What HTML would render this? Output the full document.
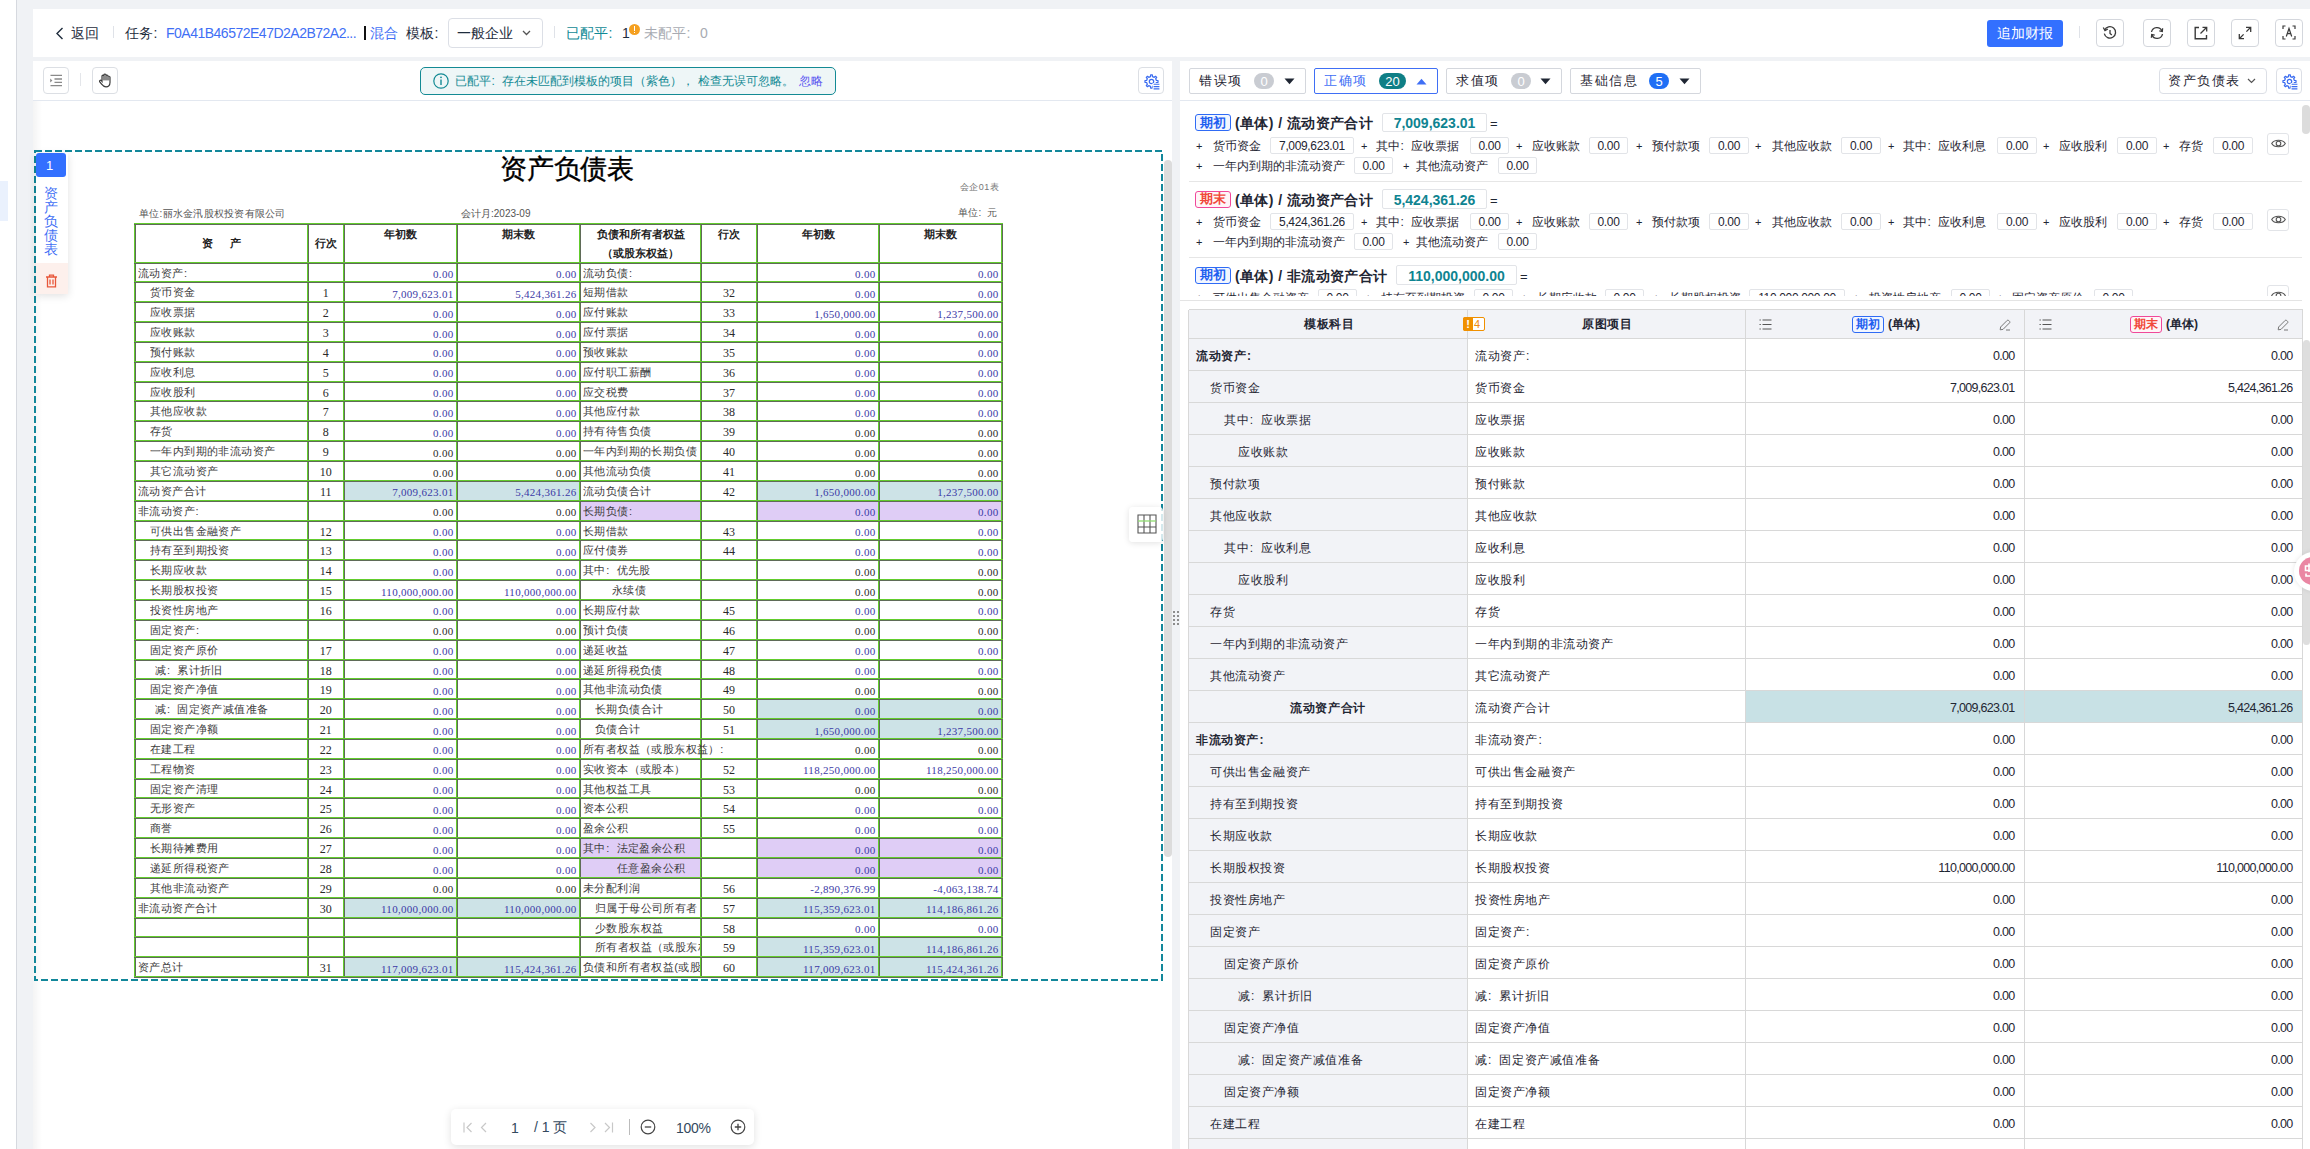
<!DOCTYPE html><html><head><meta charset="utf-8"><title>recon</title><style>

*{box-sizing:border-box;margin:0;padding:0}
html,body{width:2310px;height:1149px;overflow:hidden}
body{position:relative;background:#f0f2f5;font-family:"Liberation Sans",sans-serif;color:#1f2633;font-size:14px}
.a{position:absolute}
.t{position:absolute;white-space:nowrap;line-height:1}
.btn{position:absolute;border:1px solid #d4d7dd;border-radius:4px;background:#fff}
.sep{position:absolute;width:1px;background:#dfe2e8}
svg{position:absolute;overflow:visible}

</style></head><body>
<div class="a" style="left:0;top:0;width:17px;height:1149px;background:#fff;border-right:1px solid #d6d9df"></div>
<div class="a" style="left:0;top:181px;width:8px;height:40px;background:#eaf1fd"></div>
<div class="a" style="left:33px;top:9px;width:2277px;height:48px;background:#fff"></div>
<svg style="left:55px;top:27px" width="10" height="13" viewBox="0 0 10 13"><path d="M7.5 1 L2 6.5 L7.5 12" fill="none" stroke="#1f2d3d" stroke-width="1.4"/></svg>
<div class="t" style="left:71px;top:26px;font-size:14px;color:#1f2d3d">返回</div>
<div class="sep" style="left:113px;top:26px;height:12px"></div>
<div class="t" style="left:125px;top:26px;font-size:14px;color:#1f2d3d">任务<span style="display:inline-block;width:13.12px;padding-left:0.5px">:</span></div>
<div class="t" style="left:166px;top:26px;font-size:14px;color:#3f6ff5;letter-spacing:-0.5px">F0A41B46572E47D2A2B72A2...</div>
<div class="a" style="left:364px;top:26px;width:2px;height:14px;background:#111"></div>
<div class="t" style="left:370px;top:26px;font-size:14px;color:#3f6ff5">混合</div>
<div class="t" style="left:406px;top:26px;font-size:14px;color:#1f2d3d">模板<span style="display:inline-block;width:13.12px;padding-left:0.5px">:</span></div>
<div class="btn" style="left:448px;top:18px;width:95px;height:30px;border-color:#dcdfe6"></div>
<div class="t" style="left:457px;top:26px;font-size:14px;color:#1f2d3d">一般企业</div>
<svg style="left:522px;top:30px" width="9" height="6" viewBox="0 0 9 6"><path d="M1 1 L4.5 4.5 L8 1" fill="none" stroke="#555" stroke-width="1.3"/></svg>
<div class="sep" style="left:554px;top:26px;height:12px"></div>
<div class="t" style="left:566px;top:26px;font-size:14px;color:#118a96">已配平<span style="display:inline-block;width:13.12px;padding-left:0.5px">:</span></div>
<div class="t" style="left:622px;top:26px;font-size:14px;color:#1f2d3d">1</div>
<div class="a" style="left:629px;top:24px;width:11px;height:11px;border-radius:50%;background:#f5a020"></div>
<div class="a" style="left:633.8px;top:26px;width:1.6px;height:4.5px;background:#fff"></div>
<div class="a" style="left:633.8px;top:31.5px;width:1.6px;height:1.6px;background:#fff"></div>
<div class="t" style="left:644px;top:26px;font-size:14px;color:#a8abb2">未配平<span style="display:inline-block;width:13.12px;padding-left:0.5px">:</span></div>
<div class="t" style="left:700px;top:26px;font-size:14px;color:#a8abb2">0</div>
<div class="a" style="left:1987px;top:20px;width:76px;height:27px;border-radius:3px;background:#3370ff"></div>
<div class="t" style="left:1997px;top:26px;font-size:14px;color:#fff">追加财报</div>
<div class="sep" style="left:2079px;top:26px;height:12px"></div>
<div class="btn" style="left:2096px;top:19px;width:28px;height:28px"></div>
<div class="btn" style="left:2143px;top:19px;width:28px;height:28px"></div>
<div class="btn" style="left:2187px;top:19px;width:28px;height:28px"></div>
<div class="btn" style="left:2231px;top:19px;width:28px;height:28px"></div>
<div class="btn" style="left:2275px;top:19px;width:28px;height:28px"></div>
<svg style="left:2103px;top:26px" width="14" height="14" viewBox="0 0 14 14"><path d="M1.6 4.2 A5.7 5.7 0 1 1 1.3 7.6" fill="none" stroke="#3a3a3a" stroke-width="1.3"/><path d="M0.3 1.5 L2 4.6 L4.9 3" fill="none" stroke="#3a3a3a" stroke-width="1.3"/><path d="M7 4 V7.4 L8.8 9" fill="none" stroke="#3a3a3a" stroke-width="1.3"/></svg>
<svg style="left:2150px;top:26px" width="14" height="14" viewBox="0 0 14 14"><path d="M1.5 6 A5.5 5.5 0 0 1 12 5" fill="none" stroke="#3a3a3a" stroke-width="1.3"/><path d="M12.5 8 A5.5 5.5 0 0 1 2 9" fill="none" stroke="#3a3a3a" stroke-width="1.3"/><path d="M12.6 2.3 L12.3 5.4 L9.3 4.8" fill="none" stroke="#3a3a3a" stroke-width="1.3"/><path d="M1.4 11.7 L1.7 8.6 L4.7 9.2" fill="none" stroke="#3a3a3a" stroke-width="1.3"/></svg>
<svg style="left:2194px;top:26px" width="14" height="14" viewBox="0 0 14 14"><path d="M5 1.5 H1.2 V12.8 H12.5 V9" fill="none" stroke="#3a3a3a" stroke-width="1.4"/><path d="M6.5 7.5 L12.5 1.5 M8.5 1.3 H12.7 V5.5" fill="none" stroke="#3a3a3a" stroke-width="1.3"/></svg>
<svg style="left:2238px;top:26px" width="14" height="14" viewBox="0 0 14 14"><path d="M1.3 12.7 L5.6 8.4 M8.4 5.6 L12.7 1.3 M8 1.3 H12.7 V6 M1.3 8 V12.7 H6" fill="none" stroke="#3a3a3a" stroke-width="1.3"/></svg>
<svg style="left:2282px;top:25px" width="14" height="15" viewBox="0 0 14 15"><path d="M1 4 V1 H3.5 M10.5 1 H13 V4 M13 11 V14 H10.5 M3.5 14 H1 V11" fill="none" stroke="#3a3a3a" stroke-width="1.2"/><path d="M4.3 11.5 L7 3.5 L9.7 11.5 M5.3 8.7 H8.7" fill="none" stroke="#3a3a3a" stroke-width="1.2"/></svg>
<div class="a" style="left:33px;top:61px;width:1139px;height:1088px;background:#fff"></div>
<div class="a" style="left:33px;top:100px;width:1139px;height:1px;background:#e3e8f0"></div>
<div class="btn" style="left:43px;top:67px;width:26px;height:27px;border-color:#dcdfe4"></div>
<svg style="left:49px;top:74px" width="14" height="13" viewBox="0 0 14 13"><path d="M1.5 1.3 H13 M5.5 5 H13 M5.5 8.3 H13 M1.5 11.7 H13" stroke="#8a8a8a" stroke-width="1.3"/><path d="M1.2 4.6 L3.4 6.6 L1.2 8.6 Z" fill="#8a8a8a"/></svg>
<div class="sep" style="left:80px;top:73px;height:13px;background:#e4e6ea"></div>
<div class="btn" style="left:92px;top:67px;width:26px;height:27px;border-color:#dcdfe4"></div>
<svg style="left:98px;top:73px" width="14" height="15" viewBox="0 0 14 15"><path d="M4 8.5 V3.2 A1 1 0 0 1 6 3.2 V2 A1 1 0 0 1 8 2 V3 A1 1 0 0 1 10 3 V4.3 A1 1 0 0 1 12 4.3 V9.5 C12 12.5 10.3 13.8 8 13.8 C5.8 13.8 4.8 12.8 3.6 11.2 L1.6 8.6 A1 1 0 0 1 3.2 7.5 Z" fill="#fff" stroke="#3a3a3a" stroke-width="1.2"/><path d="M6 3.2 V7.5 M8 3 V7.5 M10 4.3 V7.5" stroke="#3a3a3a" stroke-width="1"/><path d="M4.3 3 H11.7 V7 H4.3Z" fill="#7a7a7a" opacity="0.55"/></svg>
<div class="a" style="left:420px;top:67px;width:416px;height:28px;border:1px solid #138a94;border-radius:5px;background:#eef6f7"></div>
<svg style="left:433px;top:73px" width="16" height="16" viewBox="0 0 16 16"><circle cx="8" cy="8" r="7.2" fill="none" stroke="#138a94" stroke-width="1.2"/><path d="M8 6.5 V12" stroke="#138a94" stroke-width="1.4"/><circle cx="8" cy="4.3" r="0.9" fill="#138a94"/></svg>
<div class="t" style="left:455px;top:75px;font-size:12px;color:#138a94">已配平<span style="display:inline-block;width:11.25px;padding-left:0.5px">:</span>存在未匹配到模板的项目（紫色）， 检查无误可忽略。</div>
<div class="t" style="left:799px;top:75px;font-size:12px;color:#5a55f0">忽略</div>
<div class="btn" style="left:1138px;top:67px;width:26px;height:27px;border-color:#dcdfe4"></div>
<svg style="left:1144px;top:74px" width="16" height="16" viewBox="0 0 16 16"><path d="M12.40 6.51 L14.04 6.64 L14.04 8.36 L12.40 8.49 L11.67 10.26 L12.73 11.52 L11.52 12.73 L10.26 11.67 L8.49 12.40 L8.36 14.04 L6.64 14.04 L6.51 12.40 L4.74 11.67 L3.48 12.73 L2.27 11.52 L3.33 10.26 L2.60 8.49 L0.96 8.36 L0.96 6.64 L2.60 6.51 L3.33 4.74 L2.27 3.48 L3.48 2.27 L4.74 3.33 L6.51 2.60 L6.64 0.96 L8.36 0.96 L8.49 2.60 L10.26 3.33 L11.52 2.27 L12.73 3.48 L11.67 4.74 Z" fill="none" stroke="#3b6cf0" stroke-width="1.2" stroke-linejoin="round"/><circle cx="7.5" cy="7.5" r="2.2" fill="none" stroke="#3b6cf0" stroke-width="1.2"/><rect x="8.6" y="9" width="8" height="8" fill="#fff"/><path d="M9.6 10.3 H15.4 M9.6 12.6 H15.4 M9.6 14.9 H15.4" stroke="#3b6cf0" stroke-width="1.1"/></svg>
<div class="a" style="left:33px;top:101px;width:9px;height:1048px;background:linear-gradient(to right,rgba(0,0,0,0.045),rgba(0,0,0,0))"></div>
<div class="a" style="left:1164px;top:160px;width:8px;height:697px;border-radius:4px;background:#dcdcdc"></div>
<div class="a" style="left:1173px;top:611px;width:2px;height:2px;background:#8c8c8c"></div>
<div class="a" style="left:1177px;top:611px;width:2px;height:2px;background:#8c8c8c"></div>
<div class="a" style="left:1173px;top:615px;width:2px;height:2px;background:#8c8c8c"></div>
<div class="a" style="left:1177px;top:615px;width:2px;height:2px;background:#8c8c8c"></div>
<div class="a" style="left:1173px;top:619px;width:2px;height:2px;background:#8c8c8c"></div>
<div class="a" style="left:1177px;top:619px;width:2px;height:2px;background:#8c8c8c"></div>
<div class="a" style="left:1173px;top:623px;width:2px;height:2px;background:#8c8c8c"></div>
<div class="a" style="left:1177px;top:623px;width:2px;height:2px;background:#8c8c8c"></div>
<div class="t" style="left:500px;top:156px;font-size:27px;font-weight:normal;color:#000;letter-spacing:-0.2px;-webkit-text-stroke:0.35px #000">资产负债表</div>
<div class="t" style="left:960px;top:183px;font-size:9px;letter-spacing:0.4px;color:#777">会企01表</div>
<div class="t" style="left:139px;top:209px;font-size:10px;letter-spacing:0.25px;color:#555">单位:丽水金汛股权投资有限公司</div>
<div class="t" style="left:461px;top:209px;font-size:10px;color:#555">会计月:2023-09</div>
<div class="t" style="left:958px;top:208px;font-size:10px;color:#555">单位<span style="display:inline-block;width:9.38px;padding-left:0.5px">:</span>元</div>
<div class="a" style="left:343.5px;top:480.85px;width:236.5px;height:19.850000000000023px;background:#cde3e7"></div>
<div class="a" style="left:343.5px;top:897.7px;width:236.5px;height:19.850000000000023px;background:#cde3e7"></div>
<div class="a" style="left:343.5px;top:957.25px;width:236.5px;height:19.850000000000023px;background:#cde3e7"></div>
<div class="a" style="left:757px;top:480.85px;width:245px;height:19.850000000000023px;background:#cde3e7"></div>
<div class="a" style="left:580px;top:500.70000000000005px;width:121px;height:19.84999999999991px;background:#dfcdf6"></div>
<div class="a" style="left:757px;top:500.70000000000005px;width:245px;height:19.84999999999991px;background:#dfcdf6"></div>
<div class="a" style="left:757px;top:699.2px;width:245px;height:19.84999999999991px;background:#cde3e7"></div>
<div class="a" style="left:757px;top:719.05px;width:245px;height:19.850000000000136px;background:#cde3e7"></div>
<div class="a" style="left:580px;top:838.1500000000001px;width:121px;height:19.84999999999991px;background:#dfcdf6"></div>
<div class="a" style="left:757px;top:838.1500000000001px;width:245px;height:19.84999999999991px;background:#dfcdf6"></div>
<div class="a" style="left:580px;top:858.0px;width:121px;height:19.850000000000023px;background:#dfcdf6"></div>
<div class="a" style="left:757px;top:858.0px;width:245px;height:19.850000000000023px;background:#dfcdf6"></div>
<div class="a" style="left:757px;top:897.7px;width:245px;height:19.850000000000023px;background:#cde3e7"></div>
<div class="a" style="left:757px;top:937.4000000000001px;width:245px;height:19.84999999999991px;background:#cde3e7"></div>
<div class="a" style="left:757px;top:957.25px;width:245px;height:19.850000000000023px;background:#cde3e7"></div>
<div class="a" style="left:134px;top:222.5px;width:1px;height:755.6px;background:#62cc2c"></div>
<div class="a" style="left:135px;top:222.5px;width:1px;height:755.6px;background:#5f6b58"></div>
<div class="a" style="left:307px;top:222.5px;width:1px;height:755.6px;background:#62cc2c"></div>
<div class="a" style="left:308px;top:222.5px;width:1px;height:755.6px;background:#5f6b58"></div>
<div class="a" style="left:342.5px;top:222.5px;width:1px;height:755.6px;background:#62cc2c"></div>
<div class="a" style="left:343.5px;top:222.5px;width:1px;height:755.6px;background:#5f6b58"></div>
<div class="a" style="left:456px;top:222.5px;width:1px;height:755.6px;background:#62cc2c"></div>
<div class="a" style="left:457px;top:222.5px;width:1px;height:755.6px;background:#5f6b58"></div>
<div class="a" style="left:579px;top:222.5px;width:1px;height:755.6px;background:#62cc2c"></div>
<div class="a" style="left:580px;top:222.5px;width:1px;height:755.6px;background:#5f6b58"></div>
<div class="a" style="left:700px;top:222.5px;width:1px;height:755.6px;background:#62cc2c"></div>
<div class="a" style="left:701px;top:222.5px;width:1px;height:755.6px;background:#5f6b58"></div>
<div class="a" style="left:756px;top:222.5px;width:1px;height:755.6px;background:#62cc2c"></div>
<div class="a" style="left:757px;top:222.5px;width:1px;height:755.6px;background:#5f6b58"></div>
<div class="a" style="left:878px;top:222.5px;width:1px;height:755.6px;background:#62cc2c"></div>
<div class="a" style="left:879px;top:222.5px;width:1px;height:755.6px;background:#5f6b58"></div>
<div class="a" style="left:1001px;top:222.5px;width:1px;height:755.6px;background:#62cc2c"></div>
<div class="a" style="left:1002px;top:222.5px;width:1px;height:755.6px;background:#5f6b58"></div>
<div class="a" style="left:134px;top:222.5px;width:869px;height:1px;background:#62cc2c"></div>
<div class="a" style="left:134px;top:223.5px;width:869px;height:1px;background:#5f6b58"></div>
<div class="a" style="left:134px;top:261.5px;width:869px;height:1px;background:#62cc2c"></div>
<div class="a" style="left:134px;top:262.5px;width:869px;height:1px;background:#5f6b58"></div>
<div class="a" style="left:134px;top:281.35px;width:869px;height:1px;background:#62cc2c"></div>
<div class="a" style="left:134px;top:282.35px;width:869px;height:1px;background:#5f6b58"></div>
<div class="a" style="left:134px;top:301.2px;width:869px;height:1px;background:#62cc2c"></div>
<div class="a" style="left:134px;top:302.2px;width:869px;height:1px;background:#5f6b58"></div>
<div class="a" style="left:134px;top:321.05px;width:869px;height:1px;background:#62cc2c"></div>
<div class="a" style="left:134px;top:322.05px;width:869px;height:1px;background:#5f6b58"></div>
<div class="a" style="left:134px;top:340.9px;width:869px;height:1px;background:#62cc2c"></div>
<div class="a" style="left:134px;top:341.9px;width:869px;height:1px;background:#5f6b58"></div>
<div class="a" style="left:134px;top:360.75px;width:869px;height:1px;background:#62cc2c"></div>
<div class="a" style="left:134px;top:361.75px;width:869px;height:1px;background:#5f6b58"></div>
<div class="a" style="left:134px;top:380.6px;width:869px;height:1px;background:#62cc2c"></div>
<div class="a" style="left:134px;top:381.6px;width:869px;height:1px;background:#5f6b58"></div>
<div class="a" style="left:134px;top:400.45000000000005px;width:869px;height:1px;background:#62cc2c"></div>
<div class="a" style="left:134px;top:401.45000000000005px;width:869px;height:1px;background:#5f6b58"></div>
<div class="a" style="left:134px;top:420.3px;width:869px;height:1px;background:#62cc2c"></div>
<div class="a" style="left:134px;top:421.3px;width:869px;height:1px;background:#5f6b58"></div>
<div class="a" style="left:134px;top:440.15px;width:869px;height:1px;background:#62cc2c"></div>
<div class="a" style="left:134px;top:441.15px;width:869px;height:1px;background:#5f6b58"></div>
<div class="a" style="left:134px;top:460.0px;width:869px;height:1px;background:#62cc2c"></div>
<div class="a" style="left:134px;top:461.0px;width:869px;height:1px;background:#5f6b58"></div>
<div class="a" style="left:134px;top:479.85px;width:869px;height:1px;background:#62cc2c"></div>
<div class="a" style="left:134px;top:480.85px;width:869px;height:1px;background:#5f6b58"></div>
<div class="a" style="left:134px;top:499.70000000000005px;width:869px;height:1px;background:#62cc2c"></div>
<div class="a" style="left:134px;top:500.70000000000005px;width:869px;height:1px;background:#5f6b58"></div>
<div class="a" style="left:134px;top:519.55px;width:869px;height:1px;background:#62cc2c"></div>
<div class="a" style="left:134px;top:520.55px;width:869px;height:1px;background:#5f6b58"></div>
<div class="a" style="left:134px;top:539.4000000000001px;width:869px;height:1px;background:#62cc2c"></div>
<div class="a" style="left:134px;top:540.4000000000001px;width:869px;height:1px;background:#5f6b58"></div>
<div class="a" style="left:134px;top:559.25px;width:869px;height:1px;background:#62cc2c"></div>
<div class="a" style="left:134px;top:560.25px;width:869px;height:1px;background:#5f6b58"></div>
<div class="a" style="left:134px;top:579.1px;width:869px;height:1px;background:#62cc2c"></div>
<div class="a" style="left:134px;top:580.1px;width:869px;height:1px;background:#5f6b58"></div>
<div class="a" style="left:134px;top:598.95px;width:869px;height:1px;background:#62cc2c"></div>
<div class="a" style="left:134px;top:599.95px;width:869px;height:1px;background:#5f6b58"></div>
<div class="a" style="left:134px;top:618.8px;width:869px;height:1px;background:#62cc2c"></div>
<div class="a" style="left:134px;top:619.8px;width:869px;height:1px;background:#5f6b58"></div>
<div class="a" style="left:134px;top:638.6500000000001px;width:869px;height:1px;background:#62cc2c"></div>
<div class="a" style="left:134px;top:639.6500000000001px;width:869px;height:1px;background:#5f6b58"></div>
<div class="a" style="left:134px;top:658.5px;width:869px;height:1px;background:#62cc2c"></div>
<div class="a" style="left:134px;top:659.5px;width:869px;height:1px;background:#5f6b58"></div>
<div class="a" style="left:134px;top:678.35px;width:869px;height:1px;background:#62cc2c"></div>
<div class="a" style="left:134px;top:679.35px;width:869px;height:1px;background:#5f6b58"></div>
<div class="a" style="left:134px;top:698.2px;width:869px;height:1px;background:#62cc2c"></div>
<div class="a" style="left:134px;top:699.2px;width:869px;height:1px;background:#5f6b58"></div>
<div class="a" style="left:134px;top:718.05px;width:869px;height:1px;background:#62cc2c"></div>
<div class="a" style="left:134px;top:719.05px;width:869px;height:1px;background:#5f6b58"></div>
<div class="a" style="left:134px;top:737.9000000000001px;width:869px;height:1px;background:#62cc2c"></div>
<div class="a" style="left:134px;top:738.9000000000001px;width:869px;height:1px;background:#5f6b58"></div>
<div class="a" style="left:134px;top:757.75px;width:869px;height:1px;background:#62cc2c"></div>
<div class="a" style="left:134px;top:758.75px;width:869px;height:1px;background:#5f6b58"></div>
<div class="a" style="left:134px;top:777.6px;width:869px;height:1px;background:#62cc2c"></div>
<div class="a" style="left:134px;top:778.6px;width:869px;height:1px;background:#5f6b58"></div>
<div class="a" style="left:134px;top:797.45px;width:869px;height:1px;background:#62cc2c"></div>
<div class="a" style="left:134px;top:798.45px;width:869px;height:1px;background:#5f6b58"></div>
<div class="a" style="left:134px;top:817.3000000000001px;width:869px;height:1px;background:#62cc2c"></div>
<div class="a" style="left:134px;top:818.3000000000001px;width:869px;height:1px;background:#5f6b58"></div>
<div class="a" style="left:134px;top:837.1500000000001px;width:869px;height:1px;background:#62cc2c"></div>
<div class="a" style="left:134px;top:838.1500000000001px;width:869px;height:1px;background:#5f6b58"></div>
<div class="a" style="left:134px;top:857.0px;width:869px;height:1px;background:#62cc2c"></div>
<div class="a" style="left:134px;top:858.0px;width:869px;height:1px;background:#5f6b58"></div>
<div class="a" style="left:134px;top:876.85px;width:869px;height:1px;background:#62cc2c"></div>
<div class="a" style="left:134px;top:877.85px;width:869px;height:1px;background:#5f6b58"></div>
<div class="a" style="left:134px;top:896.7px;width:869px;height:1px;background:#62cc2c"></div>
<div class="a" style="left:134px;top:897.7px;width:869px;height:1px;background:#5f6b58"></div>
<div class="a" style="left:134px;top:916.5500000000001px;width:869px;height:1px;background:#62cc2c"></div>
<div class="a" style="left:134px;top:917.5500000000001px;width:869px;height:1px;background:#5f6b58"></div>
<div class="a" style="left:134px;top:936.4000000000001px;width:869px;height:1px;background:#62cc2c"></div>
<div class="a" style="left:134px;top:937.4000000000001px;width:869px;height:1px;background:#5f6b58"></div>
<div class="a" style="left:134px;top:956.25px;width:869px;height:1px;background:#62cc2c"></div>
<div class="a" style="left:134px;top:957.25px;width:869px;height:1px;background:#5f6b58"></div>
<div class="a" style="left:134px;top:976.1px;width:869px;height:1px;background:#62cc2c"></div>
<div class="a" style="left:134px;top:977.1px;width:869px;height:1px;background:#5f6b58"></div>
<div class="t" style="left:202px;top:238px;font-size:11px;font-weight:bold;color:#222">资</div>
<div class="t" style="left:230px;top:238px;font-size:11px;font-weight:bold;color:#222">产</div>
<div class="t" style="left:225.75px;top:238px;width:200px;text-align:center;font-size:11px;font-weight:bold;color:#222">行次</div>
<div class="t" style="left:300.25px;top:228.5px;width:200px;text-align:center;font-size:11px;font-weight:bold;color:#222">年初数</div>
<div class="t" style="left:418.5px;top:228.5px;width:200px;text-align:center;font-size:11px;font-weight:bold;color:#222">期末数</div>
<div class="t" style="left:540.5px;top:228.5px;width:200px;text-align:center;font-size:11px;font-weight:bold;color:#222">负债和所有者权益</div>
<div class="t" style="left:540.5px;top:248px;width:200px;text-align:center;font-size:11px;font-weight:bold;color:#222">（或股东权益）</div>
<div class="t" style="left:629.0px;top:228.5px;width:200px;text-align:center;font-size:11px;font-weight:bold;color:#222">行次</div>
<div class="t" style="left:718.0px;top:228.5px;width:200px;text-align:center;font-size:11px;font-weight:bold;color:#222">年初数</div>
<div class="t" style="left:840.5px;top:228.5px;width:200px;text-align:center;font-size:11px;font-weight:bold;color:#222">期末数</div>
<div class="t" style="left:138px;top:267.5px;overflow:hidden;width:169px;font-size:11px;letter-spacing:0.4px;color:#3c3c3c">流动资产<span style="display:inline-block;width:10.71px;padding-left:0.5px">:</span></div>
<div class="t" style="left:253.5px;top:269.0px;width:200px;text-align:right;font-family:'Liberation Serif',serif;font-size:11px;letter-spacing:0.3px;color:#3b3aa6">0.00</div>
<div class="t" style="left:376.5px;top:269.0px;width:200px;text-align:right;font-family:'Liberation Serif',serif;font-size:11px;letter-spacing:0.3px;color:#3b3aa6">0.00</div>
<div class="t" style="left:150px;top:287.35px;overflow:hidden;width:157px;font-size:11px;letter-spacing:0.4px;color:#3c3c3c">货币资金</div>
<div class="t" style="left:225.75px;top:287.35px;width:200px;text-align:center;font-family:'Liberation Serif',serif;font-size:12px;color:#2a2a2a">1</div>
<div class="t" style="left:253.5px;top:288.85px;width:200px;text-align:right;font-family:'Liberation Serif',serif;font-size:11px;letter-spacing:0.3px;color:#3b3aa6">7,009,623.01</div>
<div class="t" style="left:376.5px;top:288.85px;width:200px;text-align:right;font-family:'Liberation Serif',serif;font-size:11px;letter-spacing:0.3px;color:#3b3aa6">5,424,361.26</div>
<div class="t" style="left:150px;top:307.2px;overflow:hidden;width:157px;font-size:11px;letter-spacing:0.4px;color:#3c3c3c">应收票据</div>
<div class="t" style="left:225.75px;top:307.2px;width:200px;text-align:center;font-family:'Liberation Serif',serif;font-size:12px;color:#2a2a2a">2</div>
<div class="t" style="left:253.5px;top:308.7px;width:200px;text-align:right;font-family:'Liberation Serif',serif;font-size:11px;letter-spacing:0.3px;color:#3b3aa6">0.00</div>
<div class="t" style="left:376.5px;top:308.7px;width:200px;text-align:right;font-family:'Liberation Serif',serif;font-size:11px;letter-spacing:0.3px;color:#3b3aa6">0.00</div>
<div class="t" style="left:150px;top:327.05px;overflow:hidden;width:157px;font-size:11px;letter-spacing:0.4px;color:#3c3c3c">应收账款</div>
<div class="t" style="left:225.75px;top:327.05px;width:200px;text-align:center;font-family:'Liberation Serif',serif;font-size:12px;color:#2a2a2a">3</div>
<div class="t" style="left:253.5px;top:328.55px;width:200px;text-align:right;font-family:'Liberation Serif',serif;font-size:11px;letter-spacing:0.3px;color:#3b3aa6">0.00</div>
<div class="t" style="left:376.5px;top:328.55px;width:200px;text-align:right;font-family:'Liberation Serif',serif;font-size:11px;letter-spacing:0.3px;color:#3b3aa6">0.00</div>
<div class="t" style="left:150px;top:346.9px;overflow:hidden;width:157px;font-size:11px;letter-spacing:0.4px;color:#3c3c3c">预付账款</div>
<div class="t" style="left:225.75px;top:346.9px;width:200px;text-align:center;font-family:'Liberation Serif',serif;font-size:12px;color:#2a2a2a">4</div>
<div class="t" style="left:253.5px;top:348.4px;width:200px;text-align:right;font-family:'Liberation Serif',serif;font-size:11px;letter-spacing:0.3px;color:#3b3aa6">0.00</div>
<div class="t" style="left:376.5px;top:348.4px;width:200px;text-align:right;font-family:'Liberation Serif',serif;font-size:11px;letter-spacing:0.3px;color:#3b3aa6">0.00</div>
<div class="t" style="left:150px;top:366.75px;overflow:hidden;width:157px;font-size:11px;letter-spacing:0.4px;color:#3c3c3c">应收利息</div>
<div class="t" style="left:225.75px;top:366.75px;width:200px;text-align:center;font-family:'Liberation Serif',serif;font-size:12px;color:#2a2a2a">5</div>
<div class="t" style="left:253.5px;top:368.25px;width:200px;text-align:right;font-family:'Liberation Serif',serif;font-size:11px;letter-spacing:0.3px;color:#3b3aa6">0.00</div>
<div class="t" style="left:376.5px;top:368.25px;width:200px;text-align:right;font-family:'Liberation Serif',serif;font-size:11px;letter-spacing:0.3px;color:#3b3aa6">0.00</div>
<div class="t" style="left:150px;top:386.6px;overflow:hidden;width:157px;font-size:11px;letter-spacing:0.4px;color:#3c3c3c">应收股利</div>
<div class="t" style="left:225.75px;top:386.6px;width:200px;text-align:center;font-family:'Liberation Serif',serif;font-size:12px;color:#2a2a2a">6</div>
<div class="t" style="left:253.5px;top:388.1px;width:200px;text-align:right;font-family:'Liberation Serif',serif;font-size:11px;letter-spacing:0.3px;color:#3b3aa6">0.00</div>
<div class="t" style="left:376.5px;top:388.1px;width:200px;text-align:right;font-family:'Liberation Serif',serif;font-size:11px;letter-spacing:0.3px;color:#3b3aa6">0.00</div>
<div class="t" style="left:150px;top:406.45000000000005px;overflow:hidden;width:157px;font-size:11px;letter-spacing:0.4px;color:#3c3c3c">其他应收款</div>
<div class="t" style="left:225.75px;top:406.45000000000005px;width:200px;text-align:center;font-family:'Liberation Serif',serif;font-size:12px;color:#2a2a2a">7</div>
<div class="t" style="left:253.5px;top:407.95000000000005px;width:200px;text-align:right;font-family:'Liberation Serif',serif;font-size:11px;letter-spacing:0.3px;color:#3b3aa6">0.00</div>
<div class="t" style="left:376.5px;top:407.95000000000005px;width:200px;text-align:right;font-family:'Liberation Serif',serif;font-size:11px;letter-spacing:0.3px;color:#3b3aa6">0.00</div>
<div class="t" style="left:150px;top:426.3px;overflow:hidden;width:157px;font-size:11px;letter-spacing:0.4px;color:#3c3c3c">存货</div>
<div class="t" style="left:225.75px;top:426.3px;width:200px;text-align:center;font-family:'Liberation Serif',serif;font-size:12px;color:#2a2a2a">8</div>
<div class="t" style="left:253.5px;top:427.8px;width:200px;text-align:right;font-family:'Liberation Serif',serif;font-size:11px;letter-spacing:0.3px;color:#3b3aa6">0.00</div>
<div class="t" style="left:376.5px;top:427.8px;width:200px;text-align:right;font-family:'Liberation Serif',serif;font-size:11px;letter-spacing:0.3px;color:#3b3aa6">0.00</div>
<div class="t" style="left:150px;top:446.15px;overflow:hidden;width:157px;font-size:11px;letter-spacing:0.4px;color:#3c3c3c">一年内到期的非流动资产</div>
<div class="t" style="left:225.75px;top:446.15px;width:200px;text-align:center;font-family:'Liberation Serif',serif;font-size:12px;color:#2a2a2a">9</div>
<div class="t" style="left:253.5px;top:447.65px;width:200px;text-align:right;font-family:'Liberation Serif',serif;font-size:11px;letter-spacing:0.3px;color:#2a2a2a">0.00</div>
<div class="t" style="left:376.5px;top:447.65px;width:200px;text-align:right;font-family:'Liberation Serif',serif;font-size:11px;letter-spacing:0.3px;color:#2a2a2a">0.00</div>
<div class="t" style="left:150px;top:466.0px;overflow:hidden;width:157px;font-size:11px;letter-spacing:0.4px;color:#3c3c3c">其它流动资产</div>
<div class="t" style="left:225.75px;top:466.0px;width:200px;text-align:center;font-family:'Liberation Serif',serif;font-size:12px;color:#2a2a2a">10</div>
<div class="t" style="left:253.5px;top:467.5px;width:200px;text-align:right;font-family:'Liberation Serif',serif;font-size:11px;letter-spacing:0.3px;color:#2a2a2a">0.00</div>
<div class="t" style="left:376.5px;top:467.5px;width:200px;text-align:right;font-family:'Liberation Serif',serif;font-size:11px;letter-spacing:0.3px;color:#2a2a2a">0.00</div>
<div class="t" style="left:138px;top:485.85px;overflow:hidden;width:169px;font-size:11px;letter-spacing:0.4px;color:#3c3c3c">流动资产合计</div>
<div class="t" style="left:225.75px;top:485.85px;width:200px;text-align:center;font-family:'Liberation Serif',serif;font-size:12px;color:#2a2a2a">11</div>
<div class="t" style="left:253.5px;top:487.35px;width:200px;text-align:right;font-family:'Liberation Serif',serif;font-size:11px;letter-spacing:0.3px;color:#3b3aa6">7,009,623.01</div>
<div class="t" style="left:376.5px;top:487.35px;width:200px;text-align:right;font-family:'Liberation Serif',serif;font-size:11px;letter-spacing:0.3px;color:#3b3aa6">5,424,361.26</div>
<div class="t" style="left:138px;top:505.70000000000005px;overflow:hidden;width:169px;font-size:11px;letter-spacing:0.4px;color:#3c3c3c">非流动资产<span style="display:inline-block;width:10.71px;padding-left:0.5px">:</span></div>
<div class="t" style="left:253.5px;top:507.20000000000005px;width:200px;text-align:right;font-family:'Liberation Serif',serif;font-size:11px;letter-spacing:0.3px;color:#2a2a2a">0.00</div>
<div class="t" style="left:376.5px;top:507.20000000000005px;width:200px;text-align:right;font-family:'Liberation Serif',serif;font-size:11px;letter-spacing:0.3px;color:#2a2a2a">0.00</div>
<div class="t" style="left:150px;top:525.55px;overflow:hidden;width:157px;font-size:11px;letter-spacing:0.4px;color:#3c3c3c">可供出售金融资产</div>
<div class="t" style="left:225.75px;top:525.55px;width:200px;text-align:center;font-family:'Liberation Serif',serif;font-size:12px;color:#2a2a2a">12</div>
<div class="t" style="left:253.5px;top:527.05px;width:200px;text-align:right;font-family:'Liberation Serif',serif;font-size:11px;letter-spacing:0.3px;color:#3b3aa6">0.00</div>
<div class="t" style="left:376.5px;top:527.05px;width:200px;text-align:right;font-family:'Liberation Serif',serif;font-size:11px;letter-spacing:0.3px;color:#3b3aa6">0.00</div>
<div class="t" style="left:150px;top:545.4000000000001px;overflow:hidden;width:157px;font-size:11px;letter-spacing:0.4px;color:#3c3c3c">持有至到期投资</div>
<div class="t" style="left:225.75px;top:545.4000000000001px;width:200px;text-align:center;font-family:'Liberation Serif',serif;font-size:12px;color:#2a2a2a">13</div>
<div class="t" style="left:253.5px;top:546.9000000000001px;width:200px;text-align:right;font-family:'Liberation Serif',serif;font-size:11px;letter-spacing:0.3px;color:#3b3aa6">0.00</div>
<div class="t" style="left:376.5px;top:546.9000000000001px;width:200px;text-align:right;font-family:'Liberation Serif',serif;font-size:11px;letter-spacing:0.3px;color:#3b3aa6">0.00</div>
<div class="t" style="left:150px;top:565.25px;overflow:hidden;width:157px;font-size:11px;letter-spacing:0.4px;color:#3c3c3c">长期应收款</div>
<div class="t" style="left:225.75px;top:565.25px;width:200px;text-align:center;font-family:'Liberation Serif',serif;font-size:12px;color:#2a2a2a">14</div>
<div class="t" style="left:253.5px;top:566.75px;width:200px;text-align:right;font-family:'Liberation Serif',serif;font-size:11px;letter-spacing:0.3px;color:#3b3aa6">0.00</div>
<div class="t" style="left:376.5px;top:566.75px;width:200px;text-align:right;font-family:'Liberation Serif',serif;font-size:11px;letter-spacing:0.3px;color:#3b3aa6">0.00</div>
<div class="t" style="left:150px;top:585.1px;overflow:hidden;width:157px;font-size:11px;letter-spacing:0.4px;color:#3c3c3c">长期股权投资</div>
<div class="t" style="left:225.75px;top:585.1px;width:200px;text-align:center;font-family:'Liberation Serif',serif;font-size:12px;color:#2a2a2a">15</div>
<div class="t" style="left:253.5px;top:586.6px;width:200px;text-align:right;font-family:'Liberation Serif',serif;font-size:11px;letter-spacing:0.3px;color:#3b3aa6">110,000,000.00</div>
<div class="t" style="left:376.5px;top:586.6px;width:200px;text-align:right;font-family:'Liberation Serif',serif;font-size:11px;letter-spacing:0.3px;color:#3b3aa6">110,000,000.00</div>
<div class="t" style="left:150px;top:604.95px;overflow:hidden;width:157px;font-size:11px;letter-spacing:0.4px;color:#3c3c3c">投资性房地产</div>
<div class="t" style="left:225.75px;top:604.95px;width:200px;text-align:center;font-family:'Liberation Serif',serif;font-size:12px;color:#2a2a2a">16</div>
<div class="t" style="left:253.5px;top:606.45px;width:200px;text-align:right;font-family:'Liberation Serif',serif;font-size:11px;letter-spacing:0.3px;color:#3b3aa6">0.00</div>
<div class="t" style="left:376.5px;top:606.45px;width:200px;text-align:right;font-family:'Liberation Serif',serif;font-size:11px;letter-spacing:0.3px;color:#3b3aa6">0.00</div>
<div class="t" style="left:150px;top:624.8px;overflow:hidden;width:157px;font-size:11px;letter-spacing:0.4px;color:#3c3c3c">固定资产<span style="display:inline-block;width:10.71px;padding-left:0.5px">:</span></div>
<div class="t" style="left:253.5px;top:626.3px;width:200px;text-align:right;font-family:'Liberation Serif',serif;font-size:11px;letter-spacing:0.3px;color:#2a2a2a">0.00</div>
<div class="t" style="left:376.5px;top:626.3px;width:200px;text-align:right;font-family:'Liberation Serif',serif;font-size:11px;letter-spacing:0.3px;color:#2a2a2a">0.00</div>
<div class="t" style="left:150px;top:644.6500000000001px;overflow:hidden;width:157px;font-size:11px;letter-spacing:0.4px;color:#3c3c3c">固定资产原价</div>
<div class="t" style="left:225.75px;top:644.6500000000001px;width:200px;text-align:center;font-family:'Liberation Serif',serif;font-size:12px;color:#2a2a2a">17</div>
<div class="t" style="left:253.5px;top:646.1500000000001px;width:200px;text-align:right;font-family:'Liberation Serif',serif;font-size:11px;letter-spacing:0.3px;color:#3b3aa6">0.00</div>
<div class="t" style="left:376.5px;top:646.1500000000001px;width:200px;text-align:right;font-family:'Liberation Serif',serif;font-size:11px;letter-spacing:0.3px;color:#3b3aa6">0.00</div>
<div class="t" style="left:155px;top:664.5px;overflow:hidden;width:152px;font-size:11px;letter-spacing:0.4px;color:#3c3c3c">减<span style="display:inline-block;width:10.71px;padding-left:0.5px">:</span>累计折旧</div>
<div class="t" style="left:225.75px;top:664.5px;width:200px;text-align:center;font-family:'Liberation Serif',serif;font-size:12px;color:#2a2a2a">18</div>
<div class="t" style="left:253.5px;top:666.0px;width:200px;text-align:right;font-family:'Liberation Serif',serif;font-size:11px;letter-spacing:0.3px;color:#3b3aa6">0.00</div>
<div class="t" style="left:376.5px;top:666.0px;width:200px;text-align:right;font-family:'Liberation Serif',serif;font-size:11px;letter-spacing:0.3px;color:#3b3aa6">0.00</div>
<div class="t" style="left:150px;top:684.35px;overflow:hidden;width:157px;font-size:11px;letter-spacing:0.4px;color:#3c3c3c">固定资产净值</div>
<div class="t" style="left:225.75px;top:684.35px;width:200px;text-align:center;font-family:'Liberation Serif',serif;font-size:12px;color:#2a2a2a">19</div>
<div class="t" style="left:253.5px;top:685.85px;width:200px;text-align:right;font-family:'Liberation Serif',serif;font-size:11px;letter-spacing:0.3px;color:#3b3aa6">0.00</div>
<div class="t" style="left:376.5px;top:685.85px;width:200px;text-align:right;font-family:'Liberation Serif',serif;font-size:11px;letter-spacing:0.3px;color:#3b3aa6">0.00</div>
<div class="t" style="left:155px;top:704.2px;overflow:hidden;width:152px;font-size:11px;letter-spacing:0.4px;color:#3c3c3c">减<span style="display:inline-block;width:10.71px;padding-left:0.5px">:</span>固定资产减值准备</div>
<div class="t" style="left:225.75px;top:704.2px;width:200px;text-align:center;font-family:'Liberation Serif',serif;font-size:12px;color:#2a2a2a">20</div>
<div class="t" style="left:253.5px;top:705.7px;width:200px;text-align:right;font-family:'Liberation Serif',serif;font-size:11px;letter-spacing:0.3px;color:#3b3aa6">0.00</div>
<div class="t" style="left:376.5px;top:705.7px;width:200px;text-align:right;font-family:'Liberation Serif',serif;font-size:11px;letter-spacing:0.3px;color:#3b3aa6">0.00</div>
<div class="t" style="left:150px;top:724.05px;overflow:hidden;width:157px;font-size:11px;letter-spacing:0.4px;color:#3c3c3c">固定资产净额</div>
<div class="t" style="left:225.75px;top:724.05px;width:200px;text-align:center;font-family:'Liberation Serif',serif;font-size:12px;color:#2a2a2a">21</div>
<div class="t" style="left:253.5px;top:725.55px;width:200px;text-align:right;font-family:'Liberation Serif',serif;font-size:11px;letter-spacing:0.3px;color:#3b3aa6">0.00</div>
<div class="t" style="left:376.5px;top:725.55px;width:200px;text-align:right;font-family:'Liberation Serif',serif;font-size:11px;letter-spacing:0.3px;color:#3b3aa6">0.00</div>
<div class="t" style="left:150px;top:743.9000000000001px;overflow:hidden;width:157px;font-size:11px;letter-spacing:0.4px;color:#3c3c3c">在建工程</div>
<div class="t" style="left:225.75px;top:743.9000000000001px;width:200px;text-align:center;font-family:'Liberation Serif',serif;font-size:12px;color:#2a2a2a">22</div>
<div class="t" style="left:253.5px;top:745.4000000000001px;width:200px;text-align:right;font-family:'Liberation Serif',serif;font-size:11px;letter-spacing:0.3px;color:#3b3aa6">0.00</div>
<div class="t" style="left:376.5px;top:745.4000000000001px;width:200px;text-align:right;font-family:'Liberation Serif',serif;font-size:11px;letter-spacing:0.3px;color:#3b3aa6">0.00</div>
<div class="t" style="left:150px;top:763.75px;overflow:hidden;width:157px;font-size:11px;letter-spacing:0.4px;color:#3c3c3c">工程物资</div>
<div class="t" style="left:225.75px;top:763.75px;width:200px;text-align:center;font-family:'Liberation Serif',serif;font-size:12px;color:#2a2a2a">23</div>
<div class="t" style="left:253.5px;top:765.25px;width:200px;text-align:right;font-family:'Liberation Serif',serif;font-size:11px;letter-spacing:0.3px;color:#3b3aa6">0.00</div>
<div class="t" style="left:376.5px;top:765.25px;width:200px;text-align:right;font-family:'Liberation Serif',serif;font-size:11px;letter-spacing:0.3px;color:#3b3aa6">0.00</div>
<div class="t" style="left:150px;top:783.6px;overflow:hidden;width:157px;font-size:11px;letter-spacing:0.4px;color:#3c3c3c">固定资产清理</div>
<div class="t" style="left:225.75px;top:783.6px;width:200px;text-align:center;font-family:'Liberation Serif',serif;font-size:12px;color:#2a2a2a">24</div>
<div class="t" style="left:253.5px;top:785.1px;width:200px;text-align:right;font-family:'Liberation Serif',serif;font-size:11px;letter-spacing:0.3px;color:#3b3aa6">0.00</div>
<div class="t" style="left:376.5px;top:785.1px;width:200px;text-align:right;font-family:'Liberation Serif',serif;font-size:11px;letter-spacing:0.3px;color:#3b3aa6">0.00</div>
<div class="t" style="left:150px;top:803.45px;overflow:hidden;width:157px;font-size:11px;letter-spacing:0.4px;color:#3c3c3c">无形资产</div>
<div class="t" style="left:225.75px;top:803.45px;width:200px;text-align:center;font-family:'Liberation Serif',serif;font-size:12px;color:#2a2a2a">25</div>
<div class="t" style="left:253.5px;top:804.95px;width:200px;text-align:right;font-family:'Liberation Serif',serif;font-size:11px;letter-spacing:0.3px;color:#3b3aa6">0.00</div>
<div class="t" style="left:376.5px;top:804.95px;width:200px;text-align:right;font-family:'Liberation Serif',serif;font-size:11px;letter-spacing:0.3px;color:#3b3aa6">0.00</div>
<div class="t" style="left:150px;top:823.3000000000001px;overflow:hidden;width:157px;font-size:11px;letter-spacing:0.4px;color:#3c3c3c">商誉</div>
<div class="t" style="left:225.75px;top:823.3000000000001px;width:200px;text-align:center;font-family:'Liberation Serif',serif;font-size:12px;color:#2a2a2a">26</div>
<div class="t" style="left:253.5px;top:824.8000000000001px;width:200px;text-align:right;font-family:'Liberation Serif',serif;font-size:11px;letter-spacing:0.3px;color:#3b3aa6">0.00</div>
<div class="t" style="left:376.5px;top:824.8000000000001px;width:200px;text-align:right;font-family:'Liberation Serif',serif;font-size:11px;letter-spacing:0.3px;color:#3b3aa6">0.00</div>
<div class="t" style="left:150px;top:843.1500000000001px;overflow:hidden;width:157px;font-size:11px;letter-spacing:0.4px;color:#3c3c3c">长期待摊费用</div>
<div class="t" style="left:225.75px;top:843.1500000000001px;width:200px;text-align:center;font-family:'Liberation Serif',serif;font-size:12px;color:#2a2a2a">27</div>
<div class="t" style="left:253.5px;top:844.6500000000001px;width:200px;text-align:right;font-family:'Liberation Serif',serif;font-size:11px;letter-spacing:0.3px;color:#3b3aa6">0.00</div>
<div class="t" style="left:376.5px;top:844.6500000000001px;width:200px;text-align:right;font-family:'Liberation Serif',serif;font-size:11px;letter-spacing:0.3px;color:#3b3aa6">0.00</div>
<div class="t" style="left:150px;top:863.0px;overflow:hidden;width:157px;font-size:11px;letter-spacing:0.4px;color:#3c3c3c">递延所得税资产</div>
<div class="t" style="left:225.75px;top:863.0px;width:200px;text-align:center;font-family:'Liberation Serif',serif;font-size:12px;color:#2a2a2a">28</div>
<div class="t" style="left:253.5px;top:864.5px;width:200px;text-align:right;font-family:'Liberation Serif',serif;font-size:11px;letter-spacing:0.3px;color:#3b3aa6">0.00</div>
<div class="t" style="left:376.5px;top:864.5px;width:200px;text-align:right;font-family:'Liberation Serif',serif;font-size:11px;letter-spacing:0.3px;color:#3b3aa6">0.00</div>
<div class="t" style="left:150px;top:882.85px;overflow:hidden;width:157px;font-size:11px;letter-spacing:0.4px;color:#3c3c3c">其他非流动资产</div>
<div class="t" style="left:225.75px;top:882.85px;width:200px;text-align:center;font-family:'Liberation Serif',serif;font-size:12px;color:#2a2a2a">29</div>
<div class="t" style="left:253.5px;top:884.35px;width:200px;text-align:right;font-family:'Liberation Serif',serif;font-size:11px;letter-spacing:0.3px;color:#2a2a2a">0.00</div>
<div class="t" style="left:376.5px;top:884.35px;width:200px;text-align:right;font-family:'Liberation Serif',serif;font-size:11px;letter-spacing:0.3px;color:#2a2a2a">0.00</div>
<div class="t" style="left:138px;top:902.7px;overflow:hidden;width:169px;font-size:11px;letter-spacing:0.4px;color:#3c3c3c">非流动资产合计</div>
<div class="t" style="left:225.75px;top:902.7px;width:200px;text-align:center;font-family:'Liberation Serif',serif;font-size:12px;color:#2a2a2a">30</div>
<div class="t" style="left:253.5px;top:904.2px;width:200px;text-align:right;font-family:'Liberation Serif',serif;font-size:11px;letter-spacing:0.3px;color:#3b3aa6">110,000,000.00</div>
<div class="t" style="left:376.5px;top:904.2px;width:200px;text-align:right;font-family:'Liberation Serif',serif;font-size:11px;letter-spacing:0.3px;color:#3b3aa6">110,000,000.00</div>
<div class="t" style="left:138px;top:962.25px;overflow:hidden;width:169px;font-size:11px;letter-spacing:0.4px;color:#3c3c3c">资产总计</div>
<div class="t" style="left:225.75px;top:962.25px;width:200px;text-align:center;font-family:'Liberation Serif',serif;font-size:12px;color:#2a2a2a">31</div>
<div class="t" style="left:253.5px;top:963.75px;width:200px;text-align:right;font-family:'Liberation Serif',serif;font-size:11px;letter-spacing:0.3px;color:#3b3aa6">117,009,623.01</div>
<div class="t" style="left:376.5px;top:963.75px;width:200px;text-align:right;font-family:'Liberation Serif',serif;font-size:11px;letter-spacing:0.3px;color:#3b3aa6">115,424,361.26</div>
<div class="t" style="left:583px;top:267.5px;overflow:hidden;width:117px;font-size:11px;letter-spacing:0.4px;color:#3c3c3c">流动负债<span style="display:inline-block;width:10.71px;padding-left:0.5px">:</span></div>
<div class="t" style="left:675.5px;top:269.0px;width:200px;text-align:right;font-family:'Liberation Serif',serif;font-size:11px;letter-spacing:0.3px;color:#3b3aa6">0.00</div>
<div class="t" style="left:798.5px;top:269.0px;width:200px;text-align:right;font-family:'Liberation Serif',serif;font-size:11px;letter-spacing:0.3px;color:#3b3aa6">0.00</div>
<div class="t" style="left:583px;top:287.35px;overflow:hidden;width:117px;font-size:11px;letter-spacing:0.4px;color:#3c3c3c">短期借款</div>
<div class="t" style="left:629.0px;top:287.35px;width:200px;text-align:center;font-family:'Liberation Serif',serif;font-size:12px;color:#2a2a2a">32</div>
<div class="t" style="left:675.5px;top:288.85px;width:200px;text-align:right;font-family:'Liberation Serif',serif;font-size:11px;letter-spacing:0.3px;color:#3b3aa6">0.00</div>
<div class="t" style="left:798.5px;top:288.85px;width:200px;text-align:right;font-family:'Liberation Serif',serif;font-size:11px;letter-spacing:0.3px;color:#3b3aa6">0.00</div>
<div class="t" style="left:583px;top:307.2px;overflow:hidden;width:117px;font-size:11px;letter-spacing:0.4px;color:#3c3c3c">应付账款</div>
<div class="t" style="left:629.0px;top:307.2px;width:200px;text-align:center;font-family:'Liberation Serif',serif;font-size:12px;color:#2a2a2a">33</div>
<div class="t" style="left:675.5px;top:308.7px;width:200px;text-align:right;font-family:'Liberation Serif',serif;font-size:11px;letter-spacing:0.3px;color:#3b3aa6">1,650,000.00</div>
<div class="t" style="left:798.5px;top:308.7px;width:200px;text-align:right;font-family:'Liberation Serif',serif;font-size:11px;letter-spacing:0.3px;color:#3b3aa6">1,237,500.00</div>
<div class="t" style="left:583px;top:327.05px;overflow:hidden;width:117px;font-size:11px;letter-spacing:0.4px;color:#3c3c3c">应付票据</div>
<div class="t" style="left:629.0px;top:327.05px;width:200px;text-align:center;font-family:'Liberation Serif',serif;font-size:12px;color:#2a2a2a">34</div>
<div class="t" style="left:675.5px;top:328.55px;width:200px;text-align:right;font-family:'Liberation Serif',serif;font-size:11px;letter-spacing:0.3px;color:#3b3aa6">0.00</div>
<div class="t" style="left:798.5px;top:328.55px;width:200px;text-align:right;font-family:'Liberation Serif',serif;font-size:11px;letter-spacing:0.3px;color:#3b3aa6">0.00</div>
<div class="t" style="left:583px;top:346.9px;overflow:hidden;width:117px;font-size:11px;letter-spacing:0.4px;color:#3c3c3c">预收账款</div>
<div class="t" style="left:629.0px;top:346.9px;width:200px;text-align:center;font-family:'Liberation Serif',serif;font-size:12px;color:#2a2a2a">35</div>
<div class="t" style="left:675.5px;top:348.4px;width:200px;text-align:right;font-family:'Liberation Serif',serif;font-size:11px;letter-spacing:0.3px;color:#3b3aa6">0.00</div>
<div class="t" style="left:798.5px;top:348.4px;width:200px;text-align:right;font-family:'Liberation Serif',serif;font-size:11px;letter-spacing:0.3px;color:#3b3aa6">0.00</div>
<div class="t" style="left:583px;top:366.75px;overflow:hidden;width:117px;font-size:11px;letter-spacing:0.4px;color:#3c3c3c">应付职工薪酬</div>
<div class="t" style="left:629.0px;top:366.75px;width:200px;text-align:center;font-family:'Liberation Serif',serif;font-size:12px;color:#2a2a2a">36</div>
<div class="t" style="left:675.5px;top:368.25px;width:200px;text-align:right;font-family:'Liberation Serif',serif;font-size:11px;letter-spacing:0.3px;color:#3b3aa6">0.00</div>
<div class="t" style="left:798.5px;top:368.25px;width:200px;text-align:right;font-family:'Liberation Serif',serif;font-size:11px;letter-spacing:0.3px;color:#3b3aa6">0.00</div>
<div class="t" style="left:583px;top:386.6px;overflow:hidden;width:117px;font-size:11px;letter-spacing:0.4px;color:#3c3c3c">应交税费</div>
<div class="t" style="left:629.0px;top:386.6px;width:200px;text-align:center;font-family:'Liberation Serif',serif;font-size:12px;color:#2a2a2a">37</div>
<div class="t" style="left:675.5px;top:388.1px;width:200px;text-align:right;font-family:'Liberation Serif',serif;font-size:11px;letter-spacing:0.3px;color:#3b3aa6">0.00</div>
<div class="t" style="left:798.5px;top:388.1px;width:200px;text-align:right;font-family:'Liberation Serif',serif;font-size:11px;letter-spacing:0.3px;color:#3b3aa6">0.00</div>
<div class="t" style="left:583px;top:406.45000000000005px;overflow:hidden;width:117px;font-size:11px;letter-spacing:0.4px;color:#3c3c3c">其他应付款</div>
<div class="t" style="left:629.0px;top:406.45000000000005px;width:200px;text-align:center;font-family:'Liberation Serif',serif;font-size:12px;color:#2a2a2a">38</div>
<div class="t" style="left:675.5px;top:407.95000000000005px;width:200px;text-align:right;font-family:'Liberation Serif',serif;font-size:11px;letter-spacing:0.3px;color:#3b3aa6">0.00</div>
<div class="t" style="left:798.5px;top:407.95000000000005px;width:200px;text-align:right;font-family:'Liberation Serif',serif;font-size:11px;letter-spacing:0.3px;color:#3b3aa6">0.00</div>
<div class="t" style="left:583px;top:426.3px;overflow:hidden;width:117px;font-size:11px;letter-spacing:0.4px;color:#3c3c3c">持有待售负债</div>
<div class="t" style="left:629.0px;top:426.3px;width:200px;text-align:center;font-family:'Liberation Serif',serif;font-size:12px;color:#2a2a2a">39</div>
<div class="t" style="left:675.5px;top:427.8px;width:200px;text-align:right;font-family:'Liberation Serif',serif;font-size:11px;letter-spacing:0.3px;color:#2a2a2a">0.00</div>
<div class="t" style="left:798.5px;top:427.8px;width:200px;text-align:right;font-family:'Liberation Serif',serif;font-size:11px;letter-spacing:0.3px;color:#2a2a2a">0.00</div>
<div class="t" style="left:583px;top:446.15px;overflow:hidden;width:117px;font-size:11px;letter-spacing:0.4px;color:#3c3c3c">一年内到期的长期负债</div>
<div class="t" style="left:629.0px;top:446.15px;width:200px;text-align:center;font-family:'Liberation Serif',serif;font-size:12px;color:#2a2a2a">40</div>
<div class="t" style="left:675.5px;top:447.65px;width:200px;text-align:right;font-family:'Liberation Serif',serif;font-size:11px;letter-spacing:0.3px;color:#2a2a2a">0.00</div>
<div class="t" style="left:798.5px;top:447.65px;width:200px;text-align:right;font-family:'Liberation Serif',serif;font-size:11px;letter-spacing:0.3px;color:#2a2a2a">0.00</div>
<div class="t" style="left:583px;top:466.0px;overflow:hidden;width:117px;font-size:11px;letter-spacing:0.4px;color:#3c3c3c">其他流动负债</div>
<div class="t" style="left:629.0px;top:466.0px;width:200px;text-align:center;font-family:'Liberation Serif',serif;font-size:12px;color:#2a2a2a">41</div>
<div class="t" style="left:675.5px;top:467.5px;width:200px;text-align:right;font-family:'Liberation Serif',serif;font-size:11px;letter-spacing:0.3px;color:#2a2a2a">0.00</div>
<div class="t" style="left:798.5px;top:467.5px;width:200px;text-align:right;font-family:'Liberation Serif',serif;font-size:11px;letter-spacing:0.3px;color:#2a2a2a">0.00</div>
<div class="t" style="left:583px;top:485.85px;overflow:hidden;width:117px;font-size:11px;letter-spacing:0.4px;color:#3c3c3c">流动负债合计</div>
<div class="t" style="left:629.0px;top:485.85px;width:200px;text-align:center;font-family:'Liberation Serif',serif;font-size:12px;color:#2a2a2a">42</div>
<div class="t" style="left:675.5px;top:487.35px;width:200px;text-align:right;font-family:'Liberation Serif',serif;font-size:11px;letter-spacing:0.3px;color:#3b3aa6">1,650,000.00</div>
<div class="t" style="left:798.5px;top:487.35px;width:200px;text-align:right;font-family:'Liberation Serif',serif;font-size:11px;letter-spacing:0.3px;color:#3b3aa6">1,237,500.00</div>
<div class="t" style="left:583px;top:505.70000000000005px;overflow:hidden;width:117px;font-size:11px;letter-spacing:0.4px;color:#3c3c3c">长期负债<span style="display:inline-block;width:10.71px;padding-left:0.5px">:</span></div>
<div class="t" style="left:675.5px;top:507.20000000000005px;width:200px;text-align:right;font-family:'Liberation Serif',serif;font-size:11px;letter-spacing:0.3px;color:#3b3aa6">0.00</div>
<div class="t" style="left:798.5px;top:507.20000000000005px;width:200px;text-align:right;font-family:'Liberation Serif',serif;font-size:11px;letter-spacing:0.3px;color:#3b3aa6">0.00</div>
<div class="t" style="left:583px;top:525.55px;overflow:hidden;width:117px;font-size:11px;letter-spacing:0.4px;color:#3c3c3c">长期借款</div>
<div class="t" style="left:629.0px;top:525.55px;width:200px;text-align:center;font-family:'Liberation Serif',serif;font-size:12px;color:#2a2a2a">43</div>
<div class="t" style="left:675.5px;top:527.05px;width:200px;text-align:right;font-family:'Liberation Serif',serif;font-size:11px;letter-spacing:0.3px;color:#3b3aa6">0.00</div>
<div class="t" style="left:798.5px;top:527.05px;width:200px;text-align:right;font-family:'Liberation Serif',serif;font-size:11px;letter-spacing:0.3px;color:#3b3aa6">0.00</div>
<div class="t" style="left:583px;top:545.4000000000001px;overflow:hidden;width:117px;font-size:11px;letter-spacing:0.4px;color:#3c3c3c">应付债券</div>
<div class="t" style="left:629.0px;top:545.4000000000001px;width:200px;text-align:center;font-family:'Liberation Serif',serif;font-size:12px;color:#2a2a2a">44</div>
<div class="t" style="left:675.5px;top:546.9000000000001px;width:200px;text-align:right;font-family:'Liberation Serif',serif;font-size:11px;letter-spacing:0.3px;color:#3b3aa6">0.00</div>
<div class="t" style="left:798.5px;top:546.9000000000001px;width:200px;text-align:right;font-family:'Liberation Serif',serif;font-size:11px;letter-spacing:0.3px;color:#3b3aa6">0.00</div>
<div class="t" style="left:583px;top:565.25px;overflow:hidden;width:117px;font-size:11px;letter-spacing:0.4px;color:#3c3c3c">其中<span style="display:inline-block;width:10.71px;padding-left:0.5px">:</span>优先股</div>
<div class="t" style="left:675.5px;top:566.75px;width:200px;text-align:right;font-family:'Liberation Serif',serif;font-size:11px;letter-spacing:0.3px;color:#2a2a2a">0.00</div>
<div class="t" style="left:798.5px;top:566.75px;width:200px;text-align:right;font-family:'Liberation Serif',serif;font-size:11px;letter-spacing:0.3px;color:#2a2a2a">0.00</div>
<div class="t" style="left:612px;top:585.1px;overflow:hidden;width:88px;font-size:11px;letter-spacing:0.4px;color:#3c3c3c">永续债</div>
<div class="t" style="left:675.5px;top:586.6px;width:200px;text-align:right;font-family:'Liberation Serif',serif;font-size:11px;letter-spacing:0.3px;color:#2a2a2a">0.00</div>
<div class="t" style="left:798.5px;top:586.6px;width:200px;text-align:right;font-family:'Liberation Serif',serif;font-size:11px;letter-spacing:0.3px;color:#2a2a2a">0.00</div>
<div class="t" style="left:583px;top:604.95px;overflow:hidden;width:117px;font-size:11px;letter-spacing:0.4px;color:#3c3c3c">长期应付款</div>
<div class="t" style="left:629.0px;top:604.95px;width:200px;text-align:center;font-family:'Liberation Serif',serif;font-size:12px;color:#2a2a2a">45</div>
<div class="t" style="left:675.5px;top:606.45px;width:200px;text-align:right;font-family:'Liberation Serif',serif;font-size:11px;letter-spacing:0.3px;color:#3b3aa6">0.00</div>
<div class="t" style="left:798.5px;top:606.45px;width:200px;text-align:right;font-family:'Liberation Serif',serif;font-size:11px;letter-spacing:0.3px;color:#3b3aa6">0.00</div>
<div class="t" style="left:583px;top:624.8px;overflow:hidden;width:117px;font-size:11px;letter-spacing:0.4px;color:#3c3c3c">预计负债</div>
<div class="t" style="left:629.0px;top:624.8px;width:200px;text-align:center;font-family:'Liberation Serif',serif;font-size:12px;color:#2a2a2a">46</div>
<div class="t" style="left:675.5px;top:626.3px;width:200px;text-align:right;font-family:'Liberation Serif',serif;font-size:11px;letter-spacing:0.3px;color:#2a2a2a">0.00</div>
<div class="t" style="left:798.5px;top:626.3px;width:200px;text-align:right;font-family:'Liberation Serif',serif;font-size:11px;letter-spacing:0.3px;color:#2a2a2a">0.00</div>
<div class="t" style="left:583px;top:644.6500000000001px;overflow:hidden;width:117px;font-size:11px;letter-spacing:0.4px;color:#3c3c3c">递延收益</div>
<div class="t" style="left:629.0px;top:644.6500000000001px;width:200px;text-align:center;font-family:'Liberation Serif',serif;font-size:12px;color:#2a2a2a">47</div>
<div class="t" style="left:675.5px;top:646.1500000000001px;width:200px;text-align:right;font-family:'Liberation Serif',serif;font-size:11px;letter-spacing:0.3px;color:#3b3aa6">0.00</div>
<div class="t" style="left:798.5px;top:646.1500000000001px;width:200px;text-align:right;font-family:'Liberation Serif',serif;font-size:11px;letter-spacing:0.3px;color:#3b3aa6">0.00</div>
<div class="t" style="left:583px;top:664.5px;overflow:hidden;width:117px;font-size:11px;letter-spacing:0.4px;color:#3c3c3c">递延所得税负债</div>
<div class="t" style="left:629.0px;top:664.5px;width:200px;text-align:center;font-family:'Liberation Serif',serif;font-size:12px;color:#2a2a2a">48</div>
<div class="t" style="left:675.5px;top:666.0px;width:200px;text-align:right;font-family:'Liberation Serif',serif;font-size:11px;letter-spacing:0.3px;color:#3b3aa6">0.00</div>
<div class="t" style="left:798.5px;top:666.0px;width:200px;text-align:right;font-family:'Liberation Serif',serif;font-size:11px;letter-spacing:0.3px;color:#3b3aa6">0.00</div>
<div class="t" style="left:583px;top:684.35px;overflow:hidden;width:117px;font-size:11px;letter-spacing:0.4px;color:#3c3c3c">其他非流动负债</div>
<div class="t" style="left:629.0px;top:684.35px;width:200px;text-align:center;font-family:'Liberation Serif',serif;font-size:12px;color:#2a2a2a">49</div>
<div class="t" style="left:675.5px;top:685.85px;width:200px;text-align:right;font-family:'Liberation Serif',serif;font-size:11px;letter-spacing:0.3px;color:#2a2a2a">0.00</div>
<div class="t" style="left:798.5px;top:685.85px;width:200px;text-align:right;font-family:'Liberation Serif',serif;font-size:11px;letter-spacing:0.3px;color:#2a2a2a">0.00</div>
<div class="t" style="left:595px;top:704.2px;overflow:hidden;width:105px;font-size:11px;letter-spacing:0.4px;color:#3c3c3c">长期负债合计</div>
<div class="t" style="left:629.0px;top:704.2px;width:200px;text-align:center;font-family:'Liberation Serif',serif;font-size:12px;color:#2a2a2a">50</div>
<div class="t" style="left:675.5px;top:705.7px;width:200px;text-align:right;font-family:'Liberation Serif',serif;font-size:11px;letter-spacing:0.3px;color:#3b3aa6">0.00</div>
<div class="t" style="left:798.5px;top:705.7px;width:200px;text-align:right;font-family:'Liberation Serif',serif;font-size:11px;letter-spacing:0.3px;color:#3b3aa6">0.00</div>
<div class="t" style="left:595px;top:724.05px;overflow:hidden;width:105px;font-size:11px;letter-spacing:0.4px;color:#3c3c3c">负债合计</div>
<div class="t" style="left:629.0px;top:724.05px;width:200px;text-align:center;font-family:'Liberation Serif',serif;font-size:12px;color:#2a2a2a">51</div>
<div class="t" style="left:675.5px;top:725.55px;width:200px;text-align:right;font-family:'Liberation Serif',serif;font-size:11px;letter-spacing:0.3px;color:#3b3aa6">1,650,000.00</div>
<div class="t" style="left:798.5px;top:725.55px;width:200px;text-align:right;font-family:'Liberation Serif',serif;font-size:11px;letter-spacing:0.3px;color:#3b3aa6">1,237,500.00</div>
<div class="t" style="left:583px;top:743.9000000000001px;font-size:11px;letter-spacing:0.4px;color:#3c3c3c">所有者权益（或股东权益）<span style="display:inline-block;width:10.71px;padding-left:0.5px">:</span></div>
<div class="t" style="left:675.5px;top:745.4000000000001px;width:200px;text-align:right;font-family:'Liberation Serif',serif;font-size:11px;letter-spacing:0.3px;color:#2a2a2a">0.00</div>
<div class="t" style="left:798.5px;top:745.4000000000001px;width:200px;text-align:right;font-family:'Liberation Serif',serif;font-size:11px;letter-spacing:0.3px;color:#2a2a2a">0.00</div>
<div class="t" style="left:583px;top:763.75px;overflow:hidden;width:117px;font-size:11px;letter-spacing:0.4px;color:#3c3c3c">实收资本（或股本）</div>
<div class="t" style="left:629.0px;top:763.75px;width:200px;text-align:center;font-family:'Liberation Serif',serif;font-size:12px;color:#2a2a2a">52</div>
<div class="t" style="left:675.5px;top:765.25px;width:200px;text-align:right;font-family:'Liberation Serif',serif;font-size:11px;letter-spacing:0.3px;color:#3b3aa6">118,250,000.00</div>
<div class="t" style="left:798.5px;top:765.25px;width:200px;text-align:right;font-family:'Liberation Serif',serif;font-size:11px;letter-spacing:0.3px;color:#3b3aa6">118,250,000.00</div>
<div class="t" style="left:583px;top:783.6px;overflow:hidden;width:117px;font-size:11px;letter-spacing:0.4px;color:#3c3c3c">其他权益工具</div>
<div class="t" style="left:629.0px;top:783.6px;width:200px;text-align:center;font-family:'Liberation Serif',serif;font-size:12px;color:#2a2a2a">53</div>
<div class="t" style="left:675.5px;top:785.1px;width:200px;text-align:right;font-family:'Liberation Serif',serif;font-size:11px;letter-spacing:0.3px;color:#2a2a2a">0.00</div>
<div class="t" style="left:798.5px;top:785.1px;width:200px;text-align:right;font-family:'Liberation Serif',serif;font-size:11px;letter-spacing:0.3px;color:#2a2a2a">0.00</div>
<div class="t" style="left:583px;top:803.45px;overflow:hidden;width:117px;font-size:11px;letter-spacing:0.4px;color:#3c3c3c">资本公积</div>
<div class="t" style="left:629.0px;top:803.45px;width:200px;text-align:center;font-family:'Liberation Serif',serif;font-size:12px;color:#2a2a2a">54</div>
<div class="t" style="left:675.5px;top:804.95px;width:200px;text-align:right;font-family:'Liberation Serif',serif;font-size:11px;letter-spacing:0.3px;color:#3b3aa6">0.00</div>
<div class="t" style="left:798.5px;top:804.95px;width:200px;text-align:right;font-family:'Liberation Serif',serif;font-size:11px;letter-spacing:0.3px;color:#3b3aa6">0.00</div>
<div class="t" style="left:583px;top:823.3000000000001px;overflow:hidden;width:117px;font-size:11px;letter-spacing:0.4px;color:#3c3c3c">盈余公积</div>
<div class="t" style="left:629.0px;top:823.3000000000001px;width:200px;text-align:center;font-family:'Liberation Serif',serif;font-size:12px;color:#2a2a2a">55</div>
<div class="t" style="left:675.5px;top:824.8000000000001px;width:200px;text-align:right;font-family:'Liberation Serif',serif;font-size:11px;letter-spacing:0.3px;color:#3b3aa6">0.00</div>
<div class="t" style="left:798.5px;top:824.8000000000001px;width:200px;text-align:right;font-family:'Liberation Serif',serif;font-size:11px;letter-spacing:0.3px;color:#3b3aa6">0.00</div>
<div class="t" style="left:583px;top:843.1500000000001px;overflow:hidden;width:117px;font-size:11px;letter-spacing:0.4px;color:#3c3c3c">其中<span style="display:inline-block;width:10.71px;padding-left:0.5px">:</span>法定盈余公积</div>
<div class="t" style="left:675.5px;top:844.6500000000001px;width:200px;text-align:right;font-family:'Liberation Serif',serif;font-size:11px;letter-spacing:0.3px;color:#3b3aa6">0.00</div>
<div class="t" style="left:798.5px;top:844.6500000000001px;width:200px;text-align:right;font-family:'Liberation Serif',serif;font-size:11px;letter-spacing:0.3px;color:#3b3aa6">0.00</div>
<div class="t" style="left:617px;top:863.0px;overflow:hidden;width:83px;font-size:11px;letter-spacing:0.4px;color:#3c3c3c">任意盈余公积</div>
<div class="t" style="left:675.5px;top:864.5px;width:200px;text-align:right;font-family:'Liberation Serif',serif;font-size:11px;letter-spacing:0.3px;color:#3b3aa6">0.00</div>
<div class="t" style="left:798.5px;top:864.5px;width:200px;text-align:right;font-family:'Liberation Serif',serif;font-size:11px;letter-spacing:0.3px;color:#3b3aa6">0.00</div>
<div class="t" style="left:583px;top:882.85px;overflow:hidden;width:117px;font-size:11px;letter-spacing:0.4px;color:#3c3c3c">未分配利润</div>
<div class="t" style="left:629.0px;top:882.85px;width:200px;text-align:center;font-family:'Liberation Serif',serif;font-size:12px;color:#2a2a2a">56</div>
<div class="t" style="left:675.5px;top:884.35px;width:200px;text-align:right;font-family:'Liberation Serif',serif;font-size:11px;letter-spacing:0.3px;color:#3b3aa6">-2,890,376.99</div>
<div class="t" style="left:798.5px;top:884.35px;width:200px;text-align:right;font-family:'Liberation Serif',serif;font-size:11px;letter-spacing:0.3px;color:#3b3aa6">-4,063,138.74</div>
<div class="t" style="left:595px;top:902.7px;overflow:hidden;width:105px;font-size:11px;letter-spacing:0.4px;color:#3c3c3c">归属于母公司所有者</div>
<div class="t" style="left:629.0px;top:902.7px;width:200px;text-align:center;font-family:'Liberation Serif',serif;font-size:12px;color:#2a2a2a">57</div>
<div class="t" style="left:675.5px;top:904.2px;width:200px;text-align:right;font-family:'Liberation Serif',serif;font-size:11px;letter-spacing:0.3px;color:#3b3aa6">115,359,623.01</div>
<div class="t" style="left:798.5px;top:904.2px;width:200px;text-align:right;font-family:'Liberation Serif',serif;font-size:11px;letter-spacing:0.3px;color:#3b3aa6">114,186,861.26</div>
<div class="t" style="left:595px;top:922.5500000000001px;overflow:hidden;width:105px;font-size:11px;letter-spacing:0.4px;color:#3c3c3c">少数股东权益</div>
<div class="t" style="left:629.0px;top:922.5500000000001px;width:200px;text-align:center;font-family:'Liberation Serif',serif;font-size:12px;color:#2a2a2a">58</div>
<div class="t" style="left:675.5px;top:924.0500000000001px;width:200px;text-align:right;font-family:'Liberation Serif',serif;font-size:11px;letter-spacing:0.3px;color:#3b3aa6">0.00</div>
<div class="t" style="left:798.5px;top:924.0500000000001px;width:200px;text-align:right;font-family:'Liberation Serif',serif;font-size:11px;letter-spacing:0.3px;color:#3b3aa6">0.00</div>
<div class="t" style="left:595px;top:942.4000000000001px;overflow:hidden;width:105px;font-size:11px;letter-spacing:0.4px;color:#3c3c3c">所有者权益（或股东权</div>
<div class="t" style="left:629.0px;top:942.4000000000001px;width:200px;text-align:center;font-family:'Liberation Serif',serif;font-size:12px;color:#2a2a2a">59</div>
<div class="t" style="left:675.5px;top:943.9000000000001px;width:200px;text-align:right;font-family:'Liberation Serif',serif;font-size:11px;letter-spacing:0.3px;color:#3b3aa6">115,359,623.01</div>
<div class="t" style="left:798.5px;top:943.9000000000001px;width:200px;text-align:right;font-family:'Liberation Serif',serif;font-size:11px;letter-spacing:0.3px;color:#3b3aa6">114,186,861.26</div>
<div class="t" style="left:583px;top:962.25px;overflow:hidden;width:117px;font-size:11px;letter-spacing:0.4px;color:#3c3c3c">负债和所有者权益(或股</div>
<div class="t" style="left:629.0px;top:962.25px;width:200px;text-align:center;font-family:'Liberation Serif',serif;font-size:12px;color:#2a2a2a">60</div>
<div class="t" style="left:675.5px;top:963.75px;width:200px;text-align:right;font-family:'Liberation Serif',serif;font-size:11px;letter-spacing:0.3px;color:#3b3aa6">117,009,623.01</div>
<div class="t" style="left:798.5px;top:963.75px;width:200px;text-align:right;font-family:'Liberation Serif',serif;font-size:11px;letter-spacing:0.3px;color:#3b3aa6">115,424,361.26</div>
<svg style="left:0;top:0" width="1200" height="1000"><rect x="35" y="151" width="1127" height="829" fill="none" stroke="#12879a" stroke-width="2" stroke-dasharray="7 3"/></svg>
<div class="a" style="left:1129px;top:507px;width:34px;height:35px;background:rgba(255,255,255,0.82);border-radius:4px;box-shadow:0 1px 6px rgba(0,0,0,0.12)"></div>
<svg style="left:1137px;top:514px" width="20" height="20" viewBox="0 0 20 20"><path d="M1 1 H19 V19 H1 Z M1 13 H19 M7 1 V19 M13 1 V19" fill="none" stroke="#555" stroke-width="1.1"/><path d="M1 7 H19" stroke="#8fdc70" stroke-width="1.3"/></svg>
<div class="a" style="left:36px;top:153px;width:32px;height:141px;background:#fff;box-shadow:0 2px 8px rgba(0,0,0,0.12)"></div>
<div class="a" style="left:36px;top:153px;width:30px;height:24px;border-radius:3px;background:#3370ff"></div>
<div class="t" style="left:46px;top:159px;font-size:13px;color:#fff">1</div>
<div class="a" style="left:43.5px;top:185.5px;width:17px;font-size:14px;line-height:14px;color:#3f6ff5;white-space:normal">资产负债表</div>
<div class="a" style="left:36px;top:263px;width:32px;height:31px;background:#fdf0ec"></div>
<svg style="left:45px;top:274px" width="13" height="14" viewBox="0 0 13 14"><path d="M1 3 H12 M4.5 3 V1.2 H8.5 V3 M2.5 3 V12.8 H10.5 V3 M5 5.5 V10.5 M8 5.5 V10.5" fill="none" stroke="#e8573a" stroke-width="1.3"/></svg>
<div class="a" style="left:451px;top:1109px;width:303px;height:36px;background:#fff;border-radius:5px;box-shadow:0 2px 8px rgba(0,0,0,0.12)"></div>
<svg style="left:463px;top:1122px" width="30" height="11" viewBox="0 0 30 11"><path d="M1 0.5 V10.5" stroke="#c8c8c8" stroke-width="1.2"/><path d="M8.5 1 L4 5.5 L8.5 10" fill="none" stroke="#c8c8c8" stroke-width="1.2"/><path d="M23 1 L18.5 5.5 L23 10" fill="none" stroke="#c8c8c8" stroke-width="1.2"/></svg>
<div class="t" style="left:511px;top:1121px;font-size:14px;color:#34495e">1</div>
<div class="t" style="left:534px;top:1120px;font-size:14px;color:#34495e">/ 1 页</div>
<svg style="left:589px;top:1122px" width="26" height="11" viewBox="0 0 26 11"><path d="M1.5 1 L6 5.5 L1.5 10" fill="none" stroke="#c8c8c8" stroke-width="1.2"/><path d="M16 1 L20.5 5.5 L16 10 M23.5 0.5 V10.5" fill="none" stroke="#c8c8c8" stroke-width="1.2"/></svg>
<div class="sep" style="left:629px;top:1119px;height:16px;background:#bbb"></div>
<svg style="left:640px;top:1119px" width="16" height="16" viewBox="0 0 16 16"><circle cx="8" cy="8" r="6.8" fill="none" stroke="#444" stroke-width="1.2"/><path d="M4.8 8 H11.2" stroke="#444" stroke-width="1.3"/></svg>
<div class="t" style="left:676px;top:1121px;font-size:14px;color:#34495e;letter-spacing:-0.3px">100%</div>
<svg style="left:730px;top:1119px" width="16" height="16" viewBox="0 0 16 16"><circle cx="8" cy="8" r="6.8" fill="none" stroke="#444" stroke-width="1.2"/><path d="M4.8 8 H11.2 M8 4.8 V11.2" stroke="#444" stroke-width="1.3"/></svg>
<div class="a" style="left:1180px;top:61px;width:1130px;height:1088px;background:#fff"></div>
<div class="a" style="left:1180px;top:100px;width:1130px;height:1px;background:#e3e8f0"></div>
<div class="a" style="left:1189px;top:68px;width:117px;height:26px;border:1px solid #d4d7dd;border-radius:2px;background:#fff"></div>
<div class="t" style="left:1199px;top:73.5px;font-size:13px;color:#1f2633;letter-spacing:1.6px;">错误项</div>
<div class="a" style="left:1254px;top:73px;width:20px;height:16px;border-radius:8px;background:#c9ccd2"></div>
<div class="t" style="left:1254px;top:75px;width:20px;text-align:center;font-size:13px;color:#fff">0</div>
<svg style="left:1284px;top:78px" width="11" height="7" viewBox="0 0 11 7"><path d="M0.5 0.5 L5.5 6.2 L10.5 0.5 Z" fill="#1f2633"/></svg>
<div class="a" style="left:1314px;top:68px;width:124px;height:26px;border:1px solid #3f6ff5;border-radius:2px;background:#fff"></div>
<div class="t" style="left:1324px;top:73.5px;font-size:13px;color:#3f6ff5;letter-spacing:1.6px;">正确项</div>
<div class="a" style="left:1379px;top:73px;width:27px;height:16px;border-radius:8px;background:#0f7f86"></div>
<div class="t" style="left:1379px;top:75px;width:27px;text-align:center;font-size:13px;color:#fff">20</div>
<svg style="left:1416px;top:78px" width="11" height="7" viewBox="0 0 11 7"><path d="M0.5 6.5 L5.5 0.8 L10.5 6.5 Z" fill="#3f6ff5"/></svg>
<div class="a" style="left:1446px;top:68px;width:116px;height:26px;border:1px solid #d4d7dd;border-radius:2px;background:#fff"></div>
<div class="t" style="left:1456px;top:73.5px;font-size:13px;color:#1f2633;letter-spacing:1.6px;">求值项</div>
<div class="a" style="left:1511px;top:73px;width:20px;height:16px;border-radius:8px;background:#c9ccd2"></div>
<div class="t" style="left:1511px;top:75px;width:20px;text-align:center;font-size:13px;color:#fff">0</div>
<svg style="left:1540px;top:78px" width="11" height="7" viewBox="0 0 11 7"><path d="M0.5 0.5 L5.5 6.2 L10.5 0.5 Z" fill="#1f2633"/></svg>
<div class="a" style="left:1570px;top:68px;width:131px;height:26px;border:1px solid #d4d7dd;border-radius:2px;background:#fff"></div>
<div class="t" style="left:1580px;top:73.5px;font-size:13px;color:#1f2633;letter-spacing:1.6px;">基础信息</div>
<div class="a" style="left:1649px;top:73px;width:20px;height:16px;border-radius:8px;background:#1f6ff5"></div>
<div class="t" style="left:1649px;top:75px;width:20px;text-align:center;font-size:13px;color:#fff">5</div>
<svg style="left:1679px;top:78px" width="11" height="7" viewBox="0 0 11 7"><path d="M0.5 0.5 L5.5 6.2 L10.5 0.5 Z" fill="#1f2633"/></svg>
<div class="btn" style="left:2159px;top:68px;width:108px;height:26px;border-color:#dcdfe6"></div>
<div class="t" style="left:2168px;top:74px;font-size:13px;color:#1f2633;letter-spacing:1.6px;">资产负债表</div>
<svg style="left:2247px;top:78px" width="9" height="6" viewBox="0 0 9 6"><path d="M1 1 L4.5 4.5 L8 1" fill="none" stroke="#555" stroke-width="1.2"/></svg>
<div class="btn" style="left:2276px;top:68px;width:26px;height:26px;border-color:#dcdfe6"></div>
<svg style="left:2282px;top:74px" width="16" height="16" viewBox="0 0 16 16"><path d="M12.40 6.51 L14.04 6.64 L14.04 8.36 L12.40 8.49 L11.67 10.26 L12.73 11.52 L11.52 12.73 L10.26 11.67 L8.49 12.40 L8.36 14.04 L6.64 14.04 L6.51 12.40 L4.74 11.67 L3.48 12.73 L2.27 11.52 L3.33 10.26 L2.60 8.49 L0.96 8.36 L0.96 6.64 L2.60 6.51 L3.33 4.74 L2.27 3.48 L3.48 2.27 L4.74 3.33 L6.51 2.60 L6.64 0.96 L8.36 0.96 L8.49 2.60 L10.26 3.33 L11.52 2.27 L12.73 3.48 L11.67 4.74 Z" fill="none" stroke="#3b6cf0" stroke-width="1.2" stroke-linejoin="round"/><circle cx="7.5" cy="7.5" r="2.2" fill="none" stroke="#3b6cf0" stroke-width="1.2"/><rect x="8.6" y="9" width="8" height="8" fill="#fff"/><path d="M9.6 10.3 H15.4 M9.6 12.6 H15.4 M9.6 14.9 H15.4" stroke="#3b6cf0" stroke-width="1.1"/></svg>
<div class="a" style="left:1180px;top:101px;width:1122px;height:195px;overflow:hidden">
<div class="a" style="left:-1180px;top:-101px;width:2310px;height:400px"><div class="a" style="left:1195px;top:114px;width:36px;height:17px;border:1px solid #2f6bf5;border-radius:3px;background:#f2f6ff"></div><div class="t" style="left:1195px;top:115.5px;width:36px;text-align:center;font-size:13px;font-weight:bold;color:#1f5ff0">期初</div>
<div class="t" style="left:1235px;top:116px;font-size:14px;color:#1f2633;font-weight:bold;letter-spacing:0.4px">(单体) / 流动资产合计</div>
<div class="a" style="left:1382px;top:112.5px;width:105px;height:19.5px;border:1px solid #e2e4e8;border-radius:2px;background:#fff"></div><div class="t" style="left:1382px;top:116.05px;width:105px;text-align:center;font-size:14px;font-weight:bold;color:#0f8491;letter-spacing:0px">7,009,623.01</div>
<div class="t" style="left:1490px;top:117px;font-size:13px;color:#1f2633;">=</div>
<div class="t" style="left:1196px;top:140.5px;font-size:11px;color:#1f2633;">+</div>
<div class="t" style="left:1213px;top:139.5px;font-size:12px;color:#1f2633;">货币资金</div>
<div class="a" style="left:1270px;top:136.5px;width:84px;height:17.5px;border:1px solid #e2e4e8;border-radius:2px;background:#fff"></div><div class="t" style="left:1270px;top:140.05px;width:84px;text-align:center;font-size:12px;color:#1f2633;letter-spacing:-0.35px">7,009,623.01</div>
<div class="t" style="left:1361px;top:140.5px;font-size:11px;color:#1f2633;">+</div>
<div class="t" style="left:1376px;top:139.5px;font-size:12px;color:#1f2633;">其中<span style="display:inline-block;width:11.25px;padding-left:0.5px">:</span>应收票据</div>
<div class="a" style="left:1470px;top:136.5px;width:39px;height:17.5px;border:1px solid #e2e4e8;border-radius:2px;background:#fff"></div><div class="t" style="left:1470px;top:140.05px;width:39px;text-align:center;font-size:12px;color:#1f2633;letter-spacing:-0.35px">0.00</div>
<div class="t" style="left:1516px;top:140.5px;font-size:11px;color:#1f2633;">+</div>
<div class="t" style="left:1532px;top:139.5px;font-size:12px;color:#1f2633;">应收账款</div>
<div class="a" style="left:1589px;top:136.5px;width:39px;height:17.5px;border:1px solid #e2e4e8;border-radius:2px;background:#fff"></div><div class="t" style="left:1589px;top:140.05px;width:39px;text-align:center;font-size:12px;color:#1f2633;letter-spacing:-0.35px">0.00</div>
<div class="t" style="left:1636px;top:140.5px;font-size:11px;color:#1f2633;">+</div>
<div class="t" style="left:1652px;top:139.5px;font-size:12px;color:#1f2633;">预付款项</div>
<div class="a" style="left:1709px;top:136.5px;width:40px;height:17.5px;border:1px solid #e2e4e8;border-radius:2px;background:#fff"></div><div class="t" style="left:1709px;top:140.05px;width:40px;text-align:center;font-size:12px;color:#1f2633;letter-spacing:-0.35px">0.00</div>
<div class="t" style="left:1755px;top:140.5px;font-size:11px;color:#1f2633;">+</div>
<div class="t" style="left:1772px;top:139.5px;font-size:12px;color:#1f2633;">其他应收款</div>
<div class="a" style="left:1841px;top:136.5px;width:40px;height:17.5px;border:1px solid #e2e4e8;border-radius:2px;background:#fff"></div><div class="t" style="left:1841px;top:140.05px;width:40px;text-align:center;font-size:12px;color:#1f2633;letter-spacing:-0.35px">0.00</div>
<div class="t" style="left:1888px;top:140.5px;font-size:11px;color:#1f2633;">+</div>
<div class="t" style="left:1903px;top:139.5px;font-size:12px;color:#1f2633;">其中<span style="display:inline-block;width:11.25px;padding-left:0.5px">:</span>应收利息</div>
<div class="a" style="left:1997px;top:136.5px;width:40px;height:17.5px;border:1px solid #e2e4e8;border-radius:2px;background:#fff"></div><div class="t" style="left:1997px;top:140.05px;width:40px;text-align:center;font-size:12px;color:#1f2633;letter-spacing:-0.35px">0.00</div>
<div class="t" style="left:2043px;top:140.5px;font-size:11px;color:#1f2633;">+</div>
<div class="t" style="left:2059px;top:139.5px;font-size:12px;color:#1f2633;">应收股利</div>
<div class="a" style="left:2117px;top:136.5px;width:40px;height:17.5px;border:1px solid #e2e4e8;border-radius:2px;background:#fff"></div><div class="t" style="left:2117px;top:140.05px;width:40px;text-align:center;font-size:12px;color:#1f2633;letter-spacing:-0.35px">0.00</div>
<div class="t" style="left:2163px;top:140.5px;font-size:11px;color:#1f2633;">+</div>
<div class="t" style="left:2179px;top:139.5px;font-size:12px;color:#1f2633;">存货</div>
<div class="a" style="left:2213px;top:136.5px;width:40px;height:17.5px;border:1px solid #e2e4e8;border-radius:2px;background:#fff"></div><div class="t" style="left:2213px;top:140.05px;width:40px;text-align:center;font-size:12px;color:#1f2633;letter-spacing:-0.35px">0.00</div>
<div class="a" style="left:2267px;top:132.5px;width:22px;height:22px;border:1px solid #e2e4e8;border-radius:3px;background:#fff"></div><svg style="left:2270.5px;top:138.0px" width="15" height="11" viewBox="0 0 15 11"><path d="M0.7 5.5 C3 1.2 12 1.2 14.3 5.5 C12 9.8 3 9.8 0.7 5.5 Z" fill="none" stroke="#555" stroke-width="1.1"/><circle cx="7.5" cy="5.5" r="2.3" fill="none" stroke="#555" stroke-width="1.1"/></svg>
<div class="t" style="left:1196px;top:160.5px;font-size:11px;color:#1f2633;">+</div>
<div class="t" style="left:1213px;top:159.5px;font-size:12px;color:#1f2633;">一年内到期的非流动资产</div>
<div class="a" style="left:1354px;top:156.5px;width:39px;height:17.5px;border:1px solid #e2e4e8;border-radius:2px;background:#fff"></div><div class="t" style="left:1354px;top:160.05px;width:39px;text-align:center;font-size:12px;color:#1f2633;letter-spacing:-0.35px">0.00</div>
<div class="t" style="left:1403px;top:160.5px;font-size:11px;color:#1f2633;">+</div>
<div class="t" style="left:1416px;top:159.5px;font-size:12px;color:#1f2633;">其他流动资产</div>
<div class="a" style="left:1498px;top:156.5px;width:39px;height:17.5px;border:1px solid #e2e4e8;border-radius:2px;background:#fff"></div><div class="t" style="left:1498px;top:160.05px;width:39px;text-align:center;font-size:12px;color:#1f2633;letter-spacing:-0.35px">0.00</div>
<div class="a" style="left:1189px;top:181px;width:1113px;height:1px;background:#e6e6e6"></div>
<div class="a" style="left:1195px;top:190.5px;width:36px;height:17px;border:1px solid #f0489a;border-radius:3px;background:#fff5f7"></div><div class="t" style="left:1195px;top:192.0px;width:36px;text-align:center;font-size:13px;font-weight:bold;color:#f0483a">期末</div>
<div class="t" style="left:1235px;top:192.5px;font-size:14px;color:#1f2633;font-weight:bold;letter-spacing:0.4px">(单体) / 流动资产合计</div>
<div class="a" style="left:1382px;top:189.0px;width:105px;height:19.5px;border:1px solid #e2e4e8;border-radius:2px;background:#fff"></div><div class="t" style="left:1382px;top:192.55px;width:105px;text-align:center;font-size:14px;font-weight:bold;color:#0f8491;letter-spacing:0px">5,424,361.26</div>
<div class="t" style="left:1490px;top:193.5px;font-size:13px;color:#1f2633;">=</div>
<div class="t" style="left:1196px;top:216.5px;font-size:11px;color:#1f2633;">+</div>
<div class="t" style="left:1213px;top:215.5px;font-size:12px;color:#1f2633;">货币资金</div>
<div class="a" style="left:1270px;top:212.5px;width:84px;height:17.5px;border:1px solid #e2e4e8;border-radius:2px;background:#fff"></div><div class="t" style="left:1270px;top:216.05px;width:84px;text-align:center;font-size:12px;color:#1f2633;letter-spacing:-0.35px">5,424,361.26</div>
<div class="t" style="left:1361px;top:216.5px;font-size:11px;color:#1f2633;">+</div>
<div class="t" style="left:1376px;top:215.5px;font-size:12px;color:#1f2633;">其中<span style="display:inline-block;width:11.25px;padding-left:0.5px">:</span>应收票据</div>
<div class="a" style="left:1470px;top:212.5px;width:39px;height:17.5px;border:1px solid #e2e4e8;border-radius:2px;background:#fff"></div><div class="t" style="left:1470px;top:216.05px;width:39px;text-align:center;font-size:12px;color:#1f2633;letter-spacing:-0.35px">0.00</div>
<div class="t" style="left:1516px;top:216.5px;font-size:11px;color:#1f2633;">+</div>
<div class="t" style="left:1532px;top:215.5px;font-size:12px;color:#1f2633;">应收账款</div>
<div class="a" style="left:1589px;top:212.5px;width:39px;height:17.5px;border:1px solid #e2e4e8;border-radius:2px;background:#fff"></div><div class="t" style="left:1589px;top:216.05px;width:39px;text-align:center;font-size:12px;color:#1f2633;letter-spacing:-0.35px">0.00</div>
<div class="t" style="left:1636px;top:216.5px;font-size:11px;color:#1f2633;">+</div>
<div class="t" style="left:1652px;top:215.5px;font-size:12px;color:#1f2633;">预付款项</div>
<div class="a" style="left:1709px;top:212.5px;width:40px;height:17.5px;border:1px solid #e2e4e8;border-radius:2px;background:#fff"></div><div class="t" style="left:1709px;top:216.05px;width:40px;text-align:center;font-size:12px;color:#1f2633;letter-spacing:-0.35px">0.00</div>
<div class="t" style="left:1755px;top:216.5px;font-size:11px;color:#1f2633;">+</div>
<div class="t" style="left:1772px;top:215.5px;font-size:12px;color:#1f2633;">其他应收款</div>
<div class="a" style="left:1841px;top:212.5px;width:40px;height:17.5px;border:1px solid #e2e4e8;border-radius:2px;background:#fff"></div><div class="t" style="left:1841px;top:216.05px;width:40px;text-align:center;font-size:12px;color:#1f2633;letter-spacing:-0.35px">0.00</div>
<div class="t" style="left:1888px;top:216.5px;font-size:11px;color:#1f2633;">+</div>
<div class="t" style="left:1903px;top:215.5px;font-size:12px;color:#1f2633;">其中<span style="display:inline-block;width:11.25px;padding-left:0.5px">:</span>应收利息</div>
<div class="a" style="left:1997px;top:212.5px;width:40px;height:17.5px;border:1px solid #e2e4e8;border-radius:2px;background:#fff"></div><div class="t" style="left:1997px;top:216.05px;width:40px;text-align:center;font-size:12px;color:#1f2633;letter-spacing:-0.35px">0.00</div>
<div class="t" style="left:2043px;top:216.5px;font-size:11px;color:#1f2633;">+</div>
<div class="t" style="left:2059px;top:215.5px;font-size:12px;color:#1f2633;">应收股利</div>
<div class="a" style="left:2117px;top:212.5px;width:40px;height:17.5px;border:1px solid #e2e4e8;border-radius:2px;background:#fff"></div><div class="t" style="left:2117px;top:216.05px;width:40px;text-align:center;font-size:12px;color:#1f2633;letter-spacing:-0.35px">0.00</div>
<div class="t" style="left:2163px;top:216.5px;font-size:11px;color:#1f2633;">+</div>
<div class="t" style="left:2179px;top:215.5px;font-size:12px;color:#1f2633;">存货</div>
<div class="a" style="left:2213px;top:212.5px;width:40px;height:17.5px;border:1px solid #e2e4e8;border-radius:2px;background:#fff"></div><div class="t" style="left:2213px;top:216.05px;width:40px;text-align:center;font-size:12px;color:#1f2633;letter-spacing:-0.35px">0.00</div>
<div class="a" style="left:2267px;top:208.5px;width:22px;height:22px;border:1px solid #e2e4e8;border-radius:3px;background:#fff"></div><svg style="left:2270.5px;top:214.0px" width="15" height="11" viewBox="0 0 15 11"><path d="M0.7 5.5 C3 1.2 12 1.2 14.3 5.5 C12 9.8 3 9.8 0.7 5.5 Z" fill="none" stroke="#555" stroke-width="1.1"/><circle cx="7.5" cy="5.5" r="2.3" fill="none" stroke="#555" stroke-width="1.1"/></svg>
<div class="t" style="left:1196px;top:236.5px;font-size:11px;color:#1f2633;">+</div>
<div class="t" style="left:1213px;top:235.5px;font-size:12px;color:#1f2633;">一年内到期的非流动资产</div>
<div class="a" style="left:1354px;top:232.5px;width:39px;height:17.5px;border:1px solid #e2e4e8;border-radius:2px;background:#fff"></div><div class="t" style="left:1354px;top:236.05px;width:39px;text-align:center;font-size:12px;color:#1f2633;letter-spacing:-0.35px">0.00</div>
<div class="t" style="left:1403px;top:236.5px;font-size:11px;color:#1f2633;">+</div>
<div class="t" style="left:1416px;top:235.5px;font-size:12px;color:#1f2633;">其他流动资产</div>
<div class="a" style="left:1498px;top:232.5px;width:39px;height:17.5px;border:1px solid #e2e4e8;border-radius:2px;background:#fff"></div><div class="t" style="left:1498px;top:236.05px;width:39px;text-align:center;font-size:12px;color:#1f2633;letter-spacing:-0.35px">0.00</div>
<div class="a" style="left:1189px;top:257px;width:1113px;height:1px;background:#e6e6e6"></div>
<div class="a" style="left:1195px;top:266.5px;width:36px;height:17px;border:1px solid #2f6bf5;border-radius:3px;background:#f2f6ff"></div><div class="t" style="left:1195px;top:268.0px;width:36px;text-align:center;font-size:13px;font-weight:bold;color:#1f5ff0">期初</div>
<div class="t" style="left:1235px;top:268.5px;font-size:14px;color:#1f2633;font-weight:bold;letter-spacing:0.4px">(单体) / 非流动资产合计</div>
<div class="a" style="left:1396px;top:265.0px;width:121px;height:19.5px;border:1px solid #e2e4e8;border-radius:2px;background:#fff"></div><div class="t" style="left:1396px;top:268.55px;width:121px;text-align:center;font-size:14px;font-weight:bold;color:#0f8491;letter-spacing:0px">110,000,000.00</div>
<div class="t" style="left:1520px;top:269.5px;font-size:13px;color:#1f2633;">=</div>
<div class="t" style="left:1196px;top:292.5px;font-size:11px;color:#1f2633;">+</div>
<div class="t" style="left:1213px;top:291.5px;font-size:12px;color:#1f2633;">可供出售金融资产</div>
<div class="a" style="left:1318px;top:288.5px;width:39px;height:17.5px;border:1px solid #e2e4e8;border-radius:2px;background:#fff"></div><div class="t" style="left:1318px;top:292.05px;width:39px;text-align:center;font-size:12px;color:#1f2633;letter-spacing:-0.35px">0.00</div>
<div class="t" style="left:1365px;top:292.5px;font-size:11px;color:#1f2633;">+</div>
<div class="t" style="left:1381px;top:291.5px;font-size:12px;color:#1f2633;">持有至到期投资</div>
<div class="a" style="left:1474px;top:288.5px;width:39px;height:17.5px;border:1px solid #e2e4e8;border-radius:2px;background:#fff"></div><div class="t" style="left:1474px;top:292.05px;width:39px;text-align:center;font-size:12px;color:#1f2633;letter-spacing:-0.35px">0.00</div>
<div class="t" style="left:1521px;top:292.5px;font-size:11px;color:#1f2633;">+</div>
<div class="t" style="left:1537px;top:291.5px;font-size:12px;color:#1f2633;">长期应收款</div>
<div class="a" style="left:1605px;top:288.5px;width:39px;height:17.5px;border:1px solid #e2e4e8;border-radius:2px;background:#fff"></div><div class="t" style="left:1605px;top:292.05px;width:39px;text-align:center;font-size:12px;color:#1f2633;letter-spacing:-0.35px">0.00</div>
<div class="t" style="left:1653px;top:292.5px;font-size:11px;color:#1f2633;">+</div>
<div class="t" style="left:1669px;top:291.5px;font-size:12px;color:#1f2633;">长期股权投资</div>
<div class="a" style="left:1749px;top:288.5px;width:96px;height:17.5px;border:1px solid #e2e4e8;border-radius:2px;background:#fff"></div><div class="t" style="left:1749px;top:292.05px;width:96px;text-align:center;font-size:12px;color:#1f2633;letter-spacing:-0.35px">110,000,000.00</div>
<div class="t" style="left:1853px;top:292.5px;font-size:11px;color:#1f2633;">+</div>
<div class="t" style="left:1869px;top:291.5px;font-size:12px;color:#1f2633;">投资性房地产</div>
<div class="a" style="left:1951px;top:288.5px;width:39px;height:17.5px;border:1px solid #e2e4e8;border-radius:2px;background:#fff"></div><div class="t" style="left:1951px;top:292.05px;width:39px;text-align:center;font-size:12px;color:#1f2633;letter-spacing:-0.35px">0.00</div>
<div class="t" style="left:1997px;top:292.5px;font-size:11px;color:#1f2633;">+</div>
<div class="t" style="left:2012px;top:291.5px;font-size:12px;color:#1f2633;">固定资产原价</div>
<div class="a" style="left:2094px;top:288.5px;width:39px;height:17.5px;border:1px solid #e2e4e8;border-radius:2px;background:#fff"></div><div class="t" style="left:2094px;top:292.05px;width:39px;text-align:center;font-size:12px;color:#1f2633;letter-spacing:-0.35px">0.00</div>
<div class="a" style="left:2267px;top:284.5px;width:22px;height:22px;border:1px solid #e2e4e8;border-radius:3px;background:#fff"></div><svg style="left:2270.5px;top:290.0px" width="15" height="11" viewBox="0 0 15 11"><path d="M0.7 5.5 C3 1.2 12 1.2 14.3 5.5 C12 9.8 3 9.8 0.7 5.5 Z" fill="none" stroke="#555" stroke-width="1.1"/><circle cx="7.5" cy="5.5" r="2.3" fill="none" stroke="#555" stroke-width="1.1"/></svg></div>
</div>
<div class="a" style="left:2302px;top:105px;width:8px;height:29px;border-radius:4px;background:#dcdcdc"></div>
<div class="a" style="left:1180px;top:300px;width:1122px;height:1px;background:#e4e4e4"></div>
<div class="a" style="left:1188.5px;top:309.5px;width:1114.0px;height:29.0px;background:#f2f3f7"></div>
<div class="a" style="left:1188.5px;top:338.5px;width:279.0px;height:32px;background:#f2f3f7"></div>
<div class="a" style="left:1188.5px;top:370.5px;width:279.0px;height:32px;background:#f2f3f7"></div>
<div class="a" style="left:1188.5px;top:402.5px;width:279.0px;height:32px;background:#f2f3f7"></div>
<div class="a" style="left:1188.5px;top:434.5px;width:279.0px;height:32px;background:#f2f3f7"></div>
<div class="a" style="left:1188.5px;top:466.5px;width:279.0px;height:32px;background:#f2f3f7"></div>
<div class="a" style="left:1188.5px;top:498.5px;width:279.0px;height:32px;background:#f2f3f7"></div>
<div class="a" style="left:1188.5px;top:530.5px;width:279.0px;height:32px;background:#f2f3f7"></div>
<div class="a" style="left:1188.5px;top:562.5px;width:279.0px;height:32px;background:#f2f3f7"></div>
<div class="a" style="left:1188.5px;top:594.5px;width:279.0px;height:32px;background:#f2f3f7"></div>
<div class="a" style="left:1188.5px;top:626.5px;width:279.0px;height:32px;background:#f2f3f7"></div>
<div class="a" style="left:1188.5px;top:658.5px;width:279.0px;height:32px;background:#f2f3f7"></div>
<div class="a" style="left:1188.5px;top:690.5px;width:279.0px;height:32px;background:#f2f3f7"></div>
<div class="a" style="left:1745.5px;top:690.5px;width:557.0px;height:32px;background:#c8e1e5"></div>
<div class="a" style="left:1188.5px;top:722.5px;width:279.0px;height:32px;background:#f2f3f7"></div>
<div class="a" style="left:1188.5px;top:754.5px;width:279.0px;height:32px;background:#f2f3f7"></div>
<div class="a" style="left:1188.5px;top:786.5px;width:279.0px;height:32px;background:#f2f3f7"></div>
<div class="a" style="left:1188.5px;top:818.5px;width:279.0px;height:32px;background:#f2f3f7"></div>
<div class="a" style="left:1188.5px;top:850.5px;width:279.0px;height:32px;background:#f2f3f7"></div>
<div class="a" style="left:1188.5px;top:882.5px;width:279.0px;height:32px;background:#f2f3f7"></div>
<div class="a" style="left:1188.5px;top:914.5px;width:279.0px;height:32px;background:#f2f3f7"></div>
<div class="a" style="left:1188.5px;top:946.5px;width:279.0px;height:32px;background:#f2f3f7"></div>
<div class="a" style="left:1188.5px;top:978.5px;width:279.0px;height:32px;background:#f2f3f7"></div>
<div class="a" style="left:1188.5px;top:1010.5px;width:279.0px;height:32px;background:#f2f3f7"></div>
<div class="a" style="left:1188.5px;top:1042.5px;width:279.0px;height:32px;background:#f2f3f7"></div>
<div class="a" style="left:1188.5px;top:1074.5px;width:279.0px;height:32px;background:#f2f3f7"></div>
<div class="a" style="left:1188.5px;top:1106.5px;width:279.0px;height:32px;background:#f2f3f7"></div>
<div class="a" style="left:1188.5px;top:1138.5px;width:279.0px;height:32px;background:#f2f3f7"></div>
<div class="a" style="left:1188.0px;top:309.5px;width:1px;height:839.5px;background:#d8d8d8"></div>
<div class="a" style="left:1467.0px;top:309.5px;width:1px;height:839.5px;background:#d8d8d8"></div>
<div class="a" style="left:1745.0px;top:309.5px;width:1px;height:839.5px;background:#d8d8d8"></div>
<div class="a" style="left:2024.0px;top:309.5px;width:1px;height:839.5px;background:#d8d8d8"></div>
<div class="a" style="left:2302.0px;top:309.5px;width:1px;height:839.5px;background:#d8d8d8"></div>
<div class="a" style="left:1188.5px;top:309.0px;width:1114.0px;height:1px;background:#d8d8d8"></div>
<div class="a" style="left:1188.5px;top:338.0px;width:1114.0px;height:1px;background:#d8d8d8"></div>
<div class="a" style="left:1188.5px;top:370.0px;width:1114.0px;height:1px;background:#d8d8d8"></div>
<div class="a" style="left:1188.5px;top:402.0px;width:1114.0px;height:1px;background:#d8d8d8"></div>
<div class="a" style="left:1188.5px;top:434.0px;width:1114.0px;height:1px;background:#d8d8d8"></div>
<div class="a" style="left:1188.5px;top:466.0px;width:1114.0px;height:1px;background:#d8d8d8"></div>
<div class="a" style="left:1188.5px;top:498.0px;width:1114.0px;height:1px;background:#d8d8d8"></div>
<div class="a" style="left:1188.5px;top:530.0px;width:1114.0px;height:1px;background:#d8d8d8"></div>
<div class="a" style="left:1188.5px;top:562.0px;width:1114.0px;height:1px;background:#d8d8d8"></div>
<div class="a" style="left:1188.5px;top:594.0px;width:1114.0px;height:1px;background:#d8d8d8"></div>
<div class="a" style="left:1188.5px;top:626.0px;width:1114.0px;height:1px;background:#d8d8d8"></div>
<div class="a" style="left:1188.5px;top:658.0px;width:1114.0px;height:1px;background:#d8d8d8"></div>
<div class="a" style="left:1188.5px;top:690.0px;width:1114.0px;height:1px;background:#d8d8d8"></div>
<div class="a" style="left:1188.5px;top:722.0px;width:1114.0px;height:1px;background:#d8d8d8"></div>
<div class="a" style="left:1188.5px;top:754.0px;width:1114.0px;height:1px;background:#d8d8d8"></div>
<div class="a" style="left:1188.5px;top:786.0px;width:1114.0px;height:1px;background:#d8d8d8"></div>
<div class="a" style="left:1188.5px;top:818.0px;width:1114.0px;height:1px;background:#d8d8d8"></div>
<div class="a" style="left:1188.5px;top:850.0px;width:1114.0px;height:1px;background:#d8d8d8"></div>
<div class="a" style="left:1188.5px;top:882.0px;width:1114.0px;height:1px;background:#d8d8d8"></div>
<div class="a" style="left:1188.5px;top:914.0px;width:1114.0px;height:1px;background:#d8d8d8"></div>
<div class="a" style="left:1188.5px;top:946.0px;width:1114.0px;height:1px;background:#d8d8d8"></div>
<div class="a" style="left:1188.5px;top:978.0px;width:1114.0px;height:1px;background:#d8d8d8"></div>
<div class="a" style="left:1188.5px;top:1010.0px;width:1114.0px;height:1px;background:#d8d8d8"></div>
<div class="a" style="left:1188.5px;top:1042.0px;width:1114.0px;height:1px;background:#d8d8d8"></div>
<div class="a" style="left:1188.5px;top:1074.0px;width:1114.0px;height:1px;background:#d8d8d8"></div>
<div class="a" style="left:1188.5px;top:1106.0px;width:1114.0px;height:1px;background:#d8d8d8"></div>
<div class="a" style="left:1188.5px;top:1138.0px;width:1114.0px;height:1px;background:#d8d8d8"></div>
<div class="t" style="left:1304px;top:318px;font-size:12px;color:#1f2633;font-weight:bold;letter-spacing:0.5px">模板科目</div>
<div class="a" style="left:1463px;top:317px;width:22px;height:14px;border:1px solid #f09000;border-radius:2px;background:#fff"></div>
<div class="a" style="left:1463px;top:317px;width:10px;height:14px;border-radius:2px 0 0 2px;background:#f09000"></div>
<div class="t" style="left:1463px;top:318.5px;width:10px;text-align:center;font-size:11px;font-weight:bold;color:#fff">!</div>
<div class="t" style="left:1474px;top:318.5px;font-size:11px;color:#f08a10">4</div>
<div class="t" style="left:1582px;top:318px;font-size:12px;color:#1f2633;font-weight:bold;letter-spacing:0.5px">原图项目</div>
<svg style="left:1759px;top:319px" width="13" height="11" viewBox="0 0 13 11"><path d="M3.5 1 H12.5 M3.5 5.5 H12.5 M3.5 10 H12.5" stroke="#555" stroke-width="1"/><path d="M0.5 1 H1.8 M0.5 5.5 H1.8 M0.5 10 H1.8" stroke="#555" stroke-width="1"/></svg>
<div class="a" style="left:1852px;top:316px;width:32px;height:17px;border:1px solid #2f6bf5;border-radius:3px;background:#f2f6ff"></div><div class="t" style="left:1852px;top:318.0px;width:32px;text-align:center;font-size:12px;font-weight:bold;color:#1f5ff0">期初</div>
<div class="t" style="left:1888px;top:318px;font-size:12px;color:#1f2633;font-weight:bold">(单体)</div>
<svg style="left:1999px;top:319px" width="12" height="12" viewBox="0 0 12 12"><path d="M1.2 10.8 L1.6 8 L8.2 1.4 A1 1 0 0 1 9.6 1.4 L10.6 2.4 A1 1 0 0 1 10.6 3.8 L4 10.4 Z" fill="none" stroke="#777" stroke-width="1"/><path d="M7 11 H11" stroke="#777" stroke-width="1"/></svg>
<svg style="left:2039px;top:319px" width="13" height="11" viewBox="0 0 13 11"><path d="M3.5 1 H12.5 M3.5 5.5 H12.5 M3.5 10 H12.5" stroke="#555" stroke-width="1"/><path d="M0.5 1 H1.8 M0.5 5.5 H1.8 M0.5 10 H1.8" stroke="#555" stroke-width="1"/></svg>
<div class="a" style="left:2130px;top:316px;width:32px;height:17px;border:1px solid #f0489a;border-radius:3px;background:#fff5f7"></div><div class="t" style="left:2130px;top:318.0px;width:32px;text-align:center;font-size:12px;font-weight:bold;color:#f0483a">期末</div>
<div class="t" style="left:2166px;top:318px;font-size:12px;color:#1f2633;font-weight:bold">(单体)</div>
<svg style="left:2277px;top:319px" width="12" height="12" viewBox="0 0 12 12"><path d="M1.2 10.8 L1.6 8 L8.2 1.4 A1 1 0 0 1 9.6 1.4 L10.6 2.4 A1 1 0 0 1 10.6 3.8 L4 10.4 Z" fill="none" stroke="#777" stroke-width="1"/><path d="M7 11 H11" stroke="#777" stroke-width="1"/></svg>
<div class="t" style="left:1196px;top:349.5px;font-size:12px;color:#1f2633;font-weight:bold;letter-spacing:0.6px;">流动资产<span style="display:inline-block;width:11.85px;padding-left:0.5px">:</span></div>
<div class="t" style="left:1475px;top:349.5px;font-size:12px;color:#1f2633;letter-spacing:0.6px;">流动资产<span style="display:inline-block;width:11.85px;padding-left:0.5px">:</span></div>
<div class="t" style="left:1724.5px;top:349.5px;width:290px;text-align:right;font-size:12.5px;color:#1f2633;letter-spacing:-0.7px">0.00</div>
<div class="t" style="left:2002.5px;top:349.5px;width:290px;text-align:right;font-size:12.5px;color:#1f2633;letter-spacing:-0.7px">0.00</div>
<div class="t" style="left:1210px;top:381.5px;font-size:12px;color:#1f2633;letter-spacing:0.6px;">货币资金</div>
<div class="t" style="left:1475px;top:381.5px;font-size:12px;color:#1f2633;letter-spacing:0.6px;">货币资金</div>
<div class="t" style="left:1724.5px;top:381.5px;width:290px;text-align:right;font-size:12.5px;color:#1f2633;letter-spacing:-0.7px">7,009,623.01</div>
<div class="t" style="left:2002.5px;top:381.5px;width:290px;text-align:right;font-size:12.5px;color:#1f2633;letter-spacing:-0.7px">5,424,361.26</div>
<div class="t" style="left:1224px;top:413.5px;font-size:12px;color:#1f2633;letter-spacing:0.6px;">其中<span style="display:inline-block;width:11.85px;padding-left:0.5px">:</span>应收票据</div>
<div class="t" style="left:1475px;top:413.5px;font-size:12px;color:#1f2633;letter-spacing:0.6px;">应收票据</div>
<div class="t" style="left:1724.5px;top:413.5px;width:290px;text-align:right;font-size:12.5px;color:#1f2633;letter-spacing:-0.7px">0.00</div>
<div class="t" style="left:2002.5px;top:413.5px;width:290px;text-align:right;font-size:12.5px;color:#1f2633;letter-spacing:-0.7px">0.00</div>
<div class="t" style="left:1238px;top:445.5px;font-size:12px;color:#1f2633;letter-spacing:0.6px;">应收账款</div>
<div class="t" style="left:1475px;top:445.5px;font-size:12px;color:#1f2633;letter-spacing:0.6px;">应收账款</div>
<div class="t" style="left:1724.5px;top:445.5px;width:290px;text-align:right;font-size:12.5px;color:#1f2633;letter-spacing:-0.7px">0.00</div>
<div class="t" style="left:2002.5px;top:445.5px;width:290px;text-align:right;font-size:12.5px;color:#1f2633;letter-spacing:-0.7px">0.00</div>
<div class="t" style="left:1210px;top:477.5px;font-size:12px;color:#1f2633;letter-spacing:0.6px;">预付款项</div>
<div class="t" style="left:1475px;top:477.5px;font-size:12px;color:#1f2633;letter-spacing:0.6px;">预付账款</div>
<div class="t" style="left:1724.5px;top:477.5px;width:290px;text-align:right;font-size:12.5px;color:#1f2633;letter-spacing:-0.7px">0.00</div>
<div class="t" style="left:2002.5px;top:477.5px;width:290px;text-align:right;font-size:12.5px;color:#1f2633;letter-spacing:-0.7px">0.00</div>
<div class="t" style="left:1210px;top:509.5px;font-size:12px;color:#1f2633;letter-spacing:0.6px;">其他应收款</div>
<div class="t" style="left:1475px;top:509.5px;font-size:12px;color:#1f2633;letter-spacing:0.6px;">其他应收款</div>
<div class="t" style="left:1724.5px;top:509.5px;width:290px;text-align:right;font-size:12.5px;color:#1f2633;letter-spacing:-0.7px">0.00</div>
<div class="t" style="left:2002.5px;top:509.5px;width:290px;text-align:right;font-size:12.5px;color:#1f2633;letter-spacing:-0.7px">0.00</div>
<div class="t" style="left:1224px;top:541.5px;font-size:12px;color:#1f2633;letter-spacing:0.6px;">其中<span style="display:inline-block;width:11.85px;padding-left:0.5px">:</span>应收利息</div>
<div class="t" style="left:1475px;top:541.5px;font-size:12px;color:#1f2633;letter-spacing:0.6px;">应收利息</div>
<div class="t" style="left:1724.5px;top:541.5px;width:290px;text-align:right;font-size:12.5px;color:#1f2633;letter-spacing:-0.7px">0.00</div>
<div class="t" style="left:2002.5px;top:541.5px;width:290px;text-align:right;font-size:12.5px;color:#1f2633;letter-spacing:-0.7px">0.00</div>
<div class="t" style="left:1238px;top:573.5px;font-size:12px;color:#1f2633;letter-spacing:0.6px;">应收股利</div>
<div class="t" style="left:1475px;top:573.5px;font-size:12px;color:#1f2633;letter-spacing:0.6px;">应收股利</div>
<div class="t" style="left:1724.5px;top:573.5px;width:290px;text-align:right;font-size:12.5px;color:#1f2633;letter-spacing:-0.7px">0.00</div>
<div class="t" style="left:2002.5px;top:573.5px;width:290px;text-align:right;font-size:12.5px;color:#1f2633;letter-spacing:-0.7px">0.00</div>
<div class="t" style="left:1210px;top:605.5px;font-size:12px;color:#1f2633;letter-spacing:0.6px;">存货</div>
<div class="t" style="left:1475px;top:605.5px;font-size:12px;color:#1f2633;letter-spacing:0.6px;">存货</div>
<div class="t" style="left:1724.5px;top:605.5px;width:290px;text-align:right;font-size:12.5px;color:#1f2633;letter-spacing:-0.7px">0.00</div>
<div class="t" style="left:2002.5px;top:605.5px;width:290px;text-align:right;font-size:12.5px;color:#1f2633;letter-spacing:-0.7px">0.00</div>
<div class="t" style="left:1210px;top:637.5px;font-size:12px;color:#1f2633;letter-spacing:0.6px;">一年内到期的非流动资产</div>
<div class="t" style="left:1475px;top:637.5px;font-size:12px;color:#1f2633;letter-spacing:0.6px;">一年内到期的非流动资产</div>
<div class="t" style="left:1724.5px;top:637.5px;width:290px;text-align:right;font-size:12.5px;color:#1f2633;letter-spacing:-0.7px">0.00</div>
<div class="t" style="left:2002.5px;top:637.5px;width:290px;text-align:right;font-size:12.5px;color:#1f2633;letter-spacing:-0.7px">0.00</div>
<div class="t" style="left:1210px;top:669.5px;font-size:12px;color:#1f2633;letter-spacing:0.6px;">其他流动资产</div>
<div class="t" style="left:1475px;top:669.5px;font-size:12px;color:#1f2633;letter-spacing:0.6px;">其它流动资产</div>
<div class="t" style="left:1724.5px;top:669.5px;width:290px;text-align:right;font-size:12.5px;color:#1f2633;letter-spacing:-0.7px">0.00</div>
<div class="t" style="left:2002.5px;top:669.5px;width:290px;text-align:right;font-size:12.5px;color:#1f2633;letter-spacing:-0.7px">0.00</div>
<div class="t" style="left:1188.5px;top:701.5px;width:279.0px;text-align:center;font-size:12px;font-weight:bold;color:#1f2633;letter-spacing:0.6px">流动资产合计</div>
<div class="t" style="left:1475px;top:701.5px;font-size:12px;color:#1f2633;letter-spacing:0.6px;">流动资产合计</div>
<div class="t" style="left:1724.5px;top:701.5px;width:290px;text-align:right;font-size:12.5px;color:#1f2633;letter-spacing:-0.7px">7,009,623.01</div>
<div class="t" style="left:2002.5px;top:701.5px;width:290px;text-align:right;font-size:12.5px;color:#1f2633;letter-spacing:-0.7px">5,424,361.26</div>
<div class="t" style="left:1196px;top:733.5px;font-size:12px;color:#1f2633;font-weight:bold;letter-spacing:0.6px;">非流动资产<span style="display:inline-block;width:11.85px;padding-left:0.5px">:</span></div>
<div class="t" style="left:1475px;top:733.5px;font-size:12px;color:#1f2633;letter-spacing:0.6px;">非流动资产<span style="display:inline-block;width:11.85px;padding-left:0.5px">:</span></div>
<div class="t" style="left:1724.5px;top:733.5px;width:290px;text-align:right;font-size:12.5px;color:#1f2633;letter-spacing:-0.7px">0.00</div>
<div class="t" style="left:2002.5px;top:733.5px;width:290px;text-align:right;font-size:12.5px;color:#1f2633;letter-spacing:-0.7px">0.00</div>
<div class="t" style="left:1210px;top:765.5px;font-size:12px;color:#1f2633;letter-spacing:0.6px;">可供出售金融资产</div>
<div class="t" style="left:1475px;top:765.5px;font-size:12px;color:#1f2633;letter-spacing:0.6px;">可供出售金融资产</div>
<div class="t" style="left:1724.5px;top:765.5px;width:290px;text-align:right;font-size:12.5px;color:#1f2633;letter-spacing:-0.7px">0.00</div>
<div class="t" style="left:2002.5px;top:765.5px;width:290px;text-align:right;font-size:12.5px;color:#1f2633;letter-spacing:-0.7px">0.00</div>
<div class="t" style="left:1210px;top:797.5px;font-size:12px;color:#1f2633;letter-spacing:0.6px;">持有至到期投资</div>
<div class="t" style="left:1475px;top:797.5px;font-size:12px;color:#1f2633;letter-spacing:0.6px;">持有至到期投资</div>
<div class="t" style="left:1724.5px;top:797.5px;width:290px;text-align:right;font-size:12.5px;color:#1f2633;letter-spacing:-0.7px">0.00</div>
<div class="t" style="left:2002.5px;top:797.5px;width:290px;text-align:right;font-size:12.5px;color:#1f2633;letter-spacing:-0.7px">0.00</div>
<div class="t" style="left:1210px;top:829.5px;font-size:12px;color:#1f2633;letter-spacing:0.6px;">长期应收款</div>
<div class="t" style="left:1475px;top:829.5px;font-size:12px;color:#1f2633;letter-spacing:0.6px;">长期应收款</div>
<div class="t" style="left:1724.5px;top:829.5px;width:290px;text-align:right;font-size:12.5px;color:#1f2633;letter-spacing:-0.7px">0.00</div>
<div class="t" style="left:2002.5px;top:829.5px;width:290px;text-align:right;font-size:12.5px;color:#1f2633;letter-spacing:-0.7px">0.00</div>
<div class="t" style="left:1210px;top:861.5px;font-size:12px;color:#1f2633;letter-spacing:0.6px;">长期股权投资</div>
<div class="t" style="left:1475px;top:861.5px;font-size:12px;color:#1f2633;letter-spacing:0.6px;">长期股权投资</div>
<div class="t" style="left:1724.5px;top:861.5px;width:290px;text-align:right;font-size:12.5px;color:#1f2633;letter-spacing:-0.7px">110,000,000.00</div>
<div class="t" style="left:2002.5px;top:861.5px;width:290px;text-align:right;font-size:12.5px;color:#1f2633;letter-spacing:-0.7px">110,000,000.00</div>
<div class="t" style="left:1210px;top:893.5px;font-size:12px;color:#1f2633;letter-spacing:0.6px;">投资性房地产</div>
<div class="t" style="left:1475px;top:893.5px;font-size:12px;color:#1f2633;letter-spacing:0.6px;">投资性房地产</div>
<div class="t" style="left:1724.5px;top:893.5px;width:290px;text-align:right;font-size:12.5px;color:#1f2633;letter-spacing:-0.7px">0.00</div>
<div class="t" style="left:2002.5px;top:893.5px;width:290px;text-align:right;font-size:12.5px;color:#1f2633;letter-spacing:-0.7px">0.00</div>
<div class="t" style="left:1210px;top:925.5px;font-size:12px;color:#1f2633;letter-spacing:0.6px;">固定资产</div>
<div class="t" style="left:1475px;top:925.5px;font-size:12px;color:#1f2633;letter-spacing:0.6px;">固定资产<span style="display:inline-block;width:11.85px;padding-left:0.5px">:</span></div>
<div class="t" style="left:1724.5px;top:925.5px;width:290px;text-align:right;font-size:12.5px;color:#1f2633;letter-spacing:-0.7px">0.00</div>
<div class="t" style="left:2002.5px;top:925.5px;width:290px;text-align:right;font-size:12.5px;color:#1f2633;letter-spacing:-0.7px">0.00</div>
<div class="t" style="left:1224px;top:957.5px;font-size:12px;color:#1f2633;letter-spacing:0.6px;">固定资产原价</div>
<div class="t" style="left:1475px;top:957.5px;font-size:12px;color:#1f2633;letter-spacing:0.6px;">固定资产原价</div>
<div class="t" style="left:1724.5px;top:957.5px;width:290px;text-align:right;font-size:12.5px;color:#1f2633;letter-spacing:-0.7px">0.00</div>
<div class="t" style="left:2002.5px;top:957.5px;width:290px;text-align:right;font-size:12.5px;color:#1f2633;letter-spacing:-0.7px">0.00</div>
<div class="t" style="left:1238px;top:989.5px;font-size:12px;color:#1f2633;letter-spacing:0.6px;">减<span style="display:inline-block;width:11.85px;padding-left:0.5px">:</span>累计折旧</div>
<div class="t" style="left:1475px;top:989.5px;font-size:12px;color:#1f2633;letter-spacing:0.6px;">减<span style="display:inline-block;width:11.85px;padding-left:0.5px">:</span>累计折旧</div>
<div class="t" style="left:1724.5px;top:989.5px;width:290px;text-align:right;font-size:12.5px;color:#1f2633;letter-spacing:-0.7px">0.00</div>
<div class="t" style="left:2002.5px;top:989.5px;width:290px;text-align:right;font-size:12.5px;color:#1f2633;letter-spacing:-0.7px">0.00</div>
<div class="t" style="left:1224px;top:1021.5px;font-size:12px;color:#1f2633;letter-spacing:0.6px;">固定资产净值</div>
<div class="t" style="left:1475px;top:1021.5px;font-size:12px;color:#1f2633;letter-spacing:0.6px;">固定资产净值</div>
<div class="t" style="left:1724.5px;top:1021.5px;width:290px;text-align:right;font-size:12.5px;color:#1f2633;letter-spacing:-0.7px">0.00</div>
<div class="t" style="left:2002.5px;top:1021.5px;width:290px;text-align:right;font-size:12.5px;color:#1f2633;letter-spacing:-0.7px">0.00</div>
<div class="t" style="left:1238px;top:1053.5px;font-size:12px;color:#1f2633;letter-spacing:0.6px;">减<span style="display:inline-block;width:11.85px;padding-left:0.5px">:</span>固定资产减值准备</div>
<div class="t" style="left:1475px;top:1053.5px;font-size:12px;color:#1f2633;letter-spacing:0.6px;">减<span style="display:inline-block;width:11.85px;padding-left:0.5px">:</span>固定资产减值准备</div>
<div class="t" style="left:1724.5px;top:1053.5px;width:290px;text-align:right;font-size:12.5px;color:#1f2633;letter-spacing:-0.7px">0.00</div>
<div class="t" style="left:2002.5px;top:1053.5px;width:290px;text-align:right;font-size:12.5px;color:#1f2633;letter-spacing:-0.7px">0.00</div>
<div class="t" style="left:1224px;top:1085.5px;font-size:12px;color:#1f2633;letter-spacing:0.6px;">固定资产净额</div>
<div class="t" style="left:1475px;top:1085.5px;font-size:12px;color:#1f2633;letter-spacing:0.6px;">固定资产净额</div>
<div class="t" style="left:1724.5px;top:1085.5px;width:290px;text-align:right;font-size:12.5px;color:#1f2633;letter-spacing:-0.7px">0.00</div>
<div class="t" style="left:2002.5px;top:1085.5px;width:290px;text-align:right;font-size:12.5px;color:#1f2633;letter-spacing:-0.7px">0.00</div>
<div class="t" style="left:1210px;top:1117.5px;font-size:12px;color:#1f2633;letter-spacing:0.6px;">在建工程</div>
<div class="t" style="left:1475px;top:1117.5px;font-size:12px;color:#1f2633;letter-spacing:0.6px;">在建工程</div>
<div class="t" style="left:1724.5px;top:1117.5px;width:290px;text-align:right;font-size:12.5px;color:#1f2633;letter-spacing:-0.7px">0.00</div>
<div class="t" style="left:2002.5px;top:1117.5px;width:290px;text-align:right;font-size:12.5px;color:#1f2633;letter-spacing:-0.7px">0.00</div>
<div class="a" style="left:2303px;top:340px;width:7px;height:305px;border-radius:4px;background:#dedede"></div>
<div class="a" style="left:2293.5px;top:551.5px;width:39px;height:39px;border-radius:50%;background:#fff;box-shadow:0 0 5px rgba(0,0,0,0.10)"></div>
<div class="a" style="left:2299px;top:557px;width:28px;height:28px;border-radius:50%;background:#ea86a3"></div>
<svg style="left:2304px;top:563px" width="8" height="16" viewBox="0 0 8 16"><path d="M1.5 3 H8 V7.5 H1.5 Z M5 0.5 V9" fill="none" stroke="#fff" stroke-width="1.6"/><path d="M2 10.5 V13 H8" fill="none" stroke="#fff" stroke-width="1.6"/></svg>
</body></html>
